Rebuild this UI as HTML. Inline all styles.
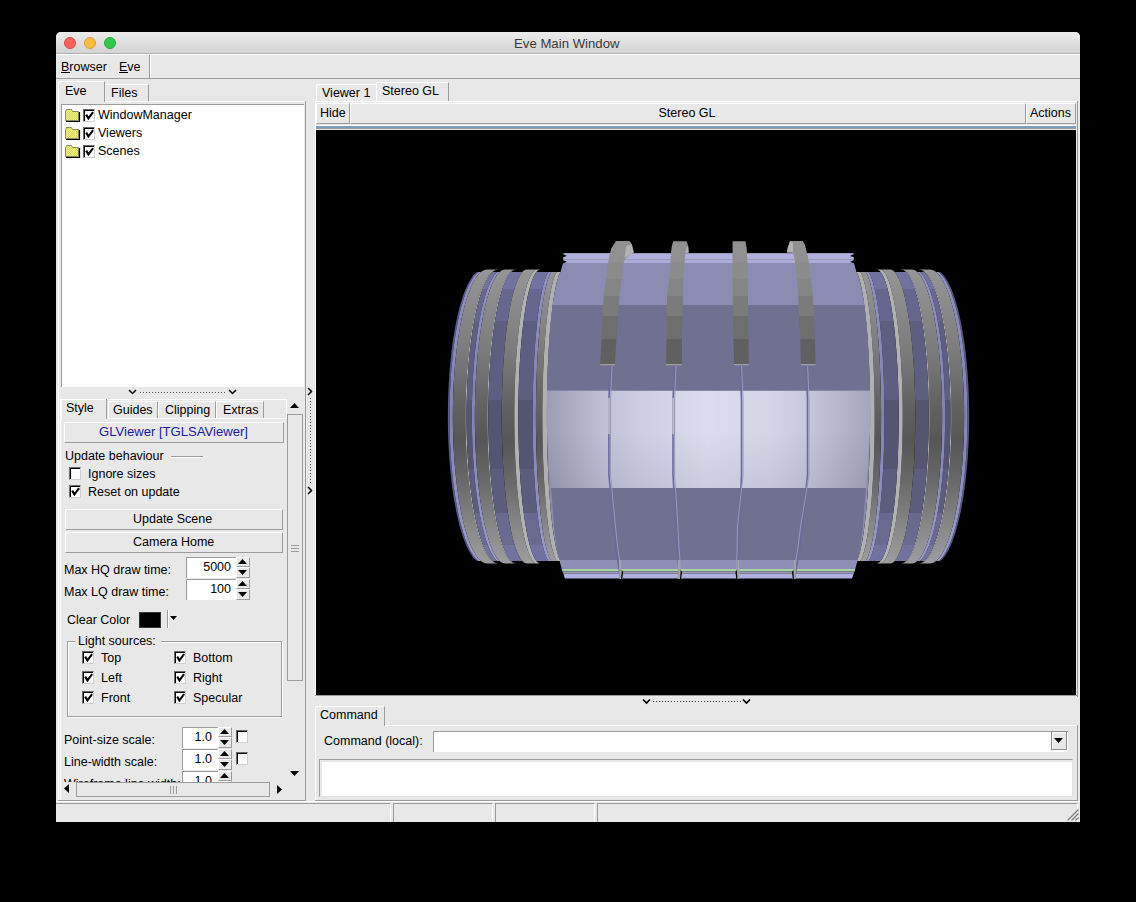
<!DOCTYPE html>
<html><head><meta charset="utf-8">
<style>
html,body{margin:0;padding:0;background:#000;width:1136px;height:902px;overflow:hidden;}
body{position:relative;font-family:"Liberation Sans",sans-serif;color:#000;}
div{position:absolute;box-sizing:border-box;}
.t{white-space:nowrap;line-height:1;font-size:12.5px;}
.cb{width:12px;height:13px;background:#fff;border-top:1px solid #6a6a6a;border-left:1px solid #6a6a6a;border-right:1px solid #d0d0d0;border-bottom:1px solid #d0d0d0;box-shadow:inset 1px 1px 0 #000;}
</style></head><body>

<div style="left:56px;top:32px;width:1024px;height:790px;background:#e8e8e8;border-radius:5px 5px 0 0;overflow:hidden;"></div>
<div style="left:56px;top:32px;width:1024px;height:22px;background:linear-gradient(#ebebeb,#d3d3d3);border-radius:5px 5px 0 0;border-bottom:1px solid #b0b0b0;"></div>
<div style="left:64px;top:37px;width:12px;height:12px;border-radius:50%;background:#fc605c;border:1px solid #df4744;"></div>
<div style="left:84px;top:37px;width:12px;height:12px;border-radius:50%;background:#fdbc40;border:1px solid #de9f34;"></div>
<div style="left:104px;top:37px;width:12px;height:12px;border-radius:50%;background:#34c84a;border:1px solid #27a83a;"></div>
<div class="t" style="left:514px;top:37px;font-size:13.2px;color:#3a3a3a;">Eve Main Window</div>
<div style="left:56px;top:54px;width:1024px;height:1px;background:#fff;"></div>
<div style="left:56px;top:78px;width:1024px;height:1px;background:#9c9c9c;"></div>
<div style="left:149px;top:55px;width:1px;height:23px;background:#9c9c9c;"></div>
<div style="left:150px;top:55px;width:1px;height:23px;background:#fff;"></div>
<div class="t" style="left:61px;top:61px;font-size:12.5px;">Browser</div>
<div style="left:61px;top:72px;width:9px;height:1px;background:#000;"></div>
<div class="t" style="left:119px;top:61px;font-size:12.5px;">Eve</div>
<div style="left:119px;top:72px;width:9px;height:1px;background:#000;"></div>
<div style="left:58px;top:101px;width:1px;height:699px;background:#fff;"></div>
<div style="left:60px;top:399px;width:1px;height:401px;background:#fff;"></div>
<div style="left:305px;top:101px;width:1px;height:700px;background:#9c9c9c;"></div>
<div style="left:58px;top:800px;width:248px;height:1px;background:#9c9c9c;"></div>
<div style="left:58px;top:81px;width:47px;height:21px;border-top:1px solid #fff;border-left:1px solid #fff;border-right:1px solid #9c9c9c;border-top-left-radius:3px;"></div>
<div class="t" style="left:65px;top:85px;font-size:12.5px;">Eve</div>
<div style="left:105px;top:84px;width:44px;height:18px;border-top:1px solid #fff;border-right:1px solid #9c9c9c;"></div>
<div class="t" style="left:111px;top:87px;font-size:12.5px;">Files</div>
<div style="left:105px;top:101px;width:200px;height:1px;background:#fff;"></div>
<div style="left:61px;top:104px;width:243px;height:283px;background:#fff;border-top:1px solid #9c9c9c;border-left:1px solid #9c9c9c;"></div>
<div style="left:65px;top:108px;width:16px;height:14px;"><svg width="16" height="14" style="position:absolute;left:0;top:0"><defs><pattern id="dp" width="2" height="2" patternUnits="userSpaceOnUse"><rect width="2" height="2" fill="#f0f080"/><rect width="1" height="1" fill="#d8d860"/><rect x="1" y="1" width="1" height="1" fill="#d8d860"/></pattern></defs><path d="M0.5 3.5 L1.5 1.5 L6.5 1.5 L7.5 3.5 L13.5 3.5 L13.5 12.5 L0.5 12.5 Z" fill="url(#dp)" stroke="#8a8a5a" stroke-width="1"/><path d="M14.5 4 L14.5 13.5 L1 13.5" stroke="#000" stroke-width="1.2" fill="none"/></svg></div>
<div class="cb" style="left:83px;top:109px;"><svg width="11" height="11" style="position:absolute;left:0;top:0"><path d="M2.2 4.6 L4.4 8.4 L9.1 2.2" stroke="#000" stroke-width="2.1" fill="none"/></svg></div>
<div class="t" style="left:98px;top:109px;font-size:12.5px;">WindowManager</div>
<div style="left:65px;top:126px;width:16px;height:14px;"><svg width="16" height="14" style="position:absolute;left:0;top:0"><defs><pattern id="dp" width="2" height="2" patternUnits="userSpaceOnUse"><rect width="2" height="2" fill="#f0f080"/><rect width="1" height="1" fill="#d8d860"/><rect x="1" y="1" width="1" height="1" fill="#d8d860"/></pattern></defs><path d="M0.5 3.5 L1.5 1.5 L6.5 1.5 L7.5 3.5 L13.5 3.5 L13.5 12.5 L0.5 12.5 Z" fill="url(#dp)" stroke="#8a8a5a" stroke-width="1"/><path d="M14.5 4 L14.5 13.5 L1 13.5" stroke="#000" stroke-width="1.2" fill="none"/></svg></div>
<div class="cb" style="left:83px;top:127px;"><svg width="11" height="11" style="position:absolute;left:0;top:0"><path d="M2.2 4.6 L4.4 8.4 L9.1 2.2" stroke="#000" stroke-width="2.1" fill="none"/></svg></div>
<div class="t" style="left:98px;top:127px;font-size:12.5px;">Viewers</div>
<div style="left:65px;top:144px;width:16px;height:14px;"><svg width="16" height="14" style="position:absolute;left:0;top:0"><defs><pattern id="dp" width="2" height="2" patternUnits="userSpaceOnUse"><rect width="2" height="2" fill="#f0f080"/><rect width="1" height="1" fill="#d8d860"/><rect x="1" y="1" width="1" height="1" fill="#d8d860"/></pattern></defs><path d="M0.5 3.5 L1.5 1.5 L6.5 1.5 L7.5 3.5 L13.5 3.5 L13.5 12.5 L0.5 12.5 Z" fill="url(#dp)" stroke="#8a8a5a" stroke-width="1"/><path d="M14.5 4 L14.5 13.5 L1 13.5" stroke="#000" stroke-width="1.2" fill="none"/></svg></div>
<div class="cb" style="left:83px;top:145px;"><svg width="11" height="11" style="position:absolute;left:0;top:0"><path d="M2.2 4.6 L4.4 8.4 L9.1 2.2" stroke="#000" stroke-width="2.1" fill="none"/></svg></div>
<div class="t" style="left:98px;top:145px;font-size:12.5px;">Scenes</div>
<svg style="position:absolute;left:128px;top:389px" width="110" height="6"><path d="M1 1 L4.5 4.5 L8 1" stroke="#000" stroke-width="1.5" fill="none"/><path d="M101 1 L104.5 4.5 L108 1" stroke="#000" stroke-width="1.5" fill="none"/><line x1="12" y1="3.5" x2="98" y2="3.5" stroke="#555" stroke-width="1" stroke-dasharray="1 2"/></svg>
<div style="left:61px;top:399px;width:226px;height:1px;background:#fff;"></div>
<div style="left:286px;top:399px;width:1px;height:20px;background:#fff;"></div>
<div style="left:61px;top:399px;width:46px;height:20px;border-left:1px solid #fff;border-right:1px solid #9c9c9c;"></div>
<div class="t" style="left:66px;top:402px;font-size:12.5px;">Style</div>
<div style="left:108px;top:401px;width:50px;height:18px;border-top:1px solid #fff;border-left:1px solid #fff;border-right:1px solid #9c9c9c;"></div>
<div class="t" style="left:113px;top:404px;font-size:12.5px;">Guides</div>
<div style="left:158px;top:401px;width:58px;height:18px;border-top:1px solid #fff;border-left:1px solid #fff;border-right:1px solid #9c9c9c;"></div>
<div class="t" style="left:165px;top:404px;font-size:12.5px;">Clipping</div>
<div style="left:216px;top:401px;width:48px;height:18px;border-top:1px solid #fff;border-left:1px solid #fff;border-right:1px solid #9c9c9c;"></div>
<div class="t" style="left:223px;top:404px;font-size:12.5px;">Extras</div>
<div style="left:107px;top:418px;width:180px;height:1px;background:#fff;"></div>
<div style="left:64px;top:422px;width:220px;height:21px;border-top:1px solid #fff;border-left:1px solid #fff;border-right:1px solid #9c9c9c;border-bottom:1px solid #9c9c9c;"></div>
<div class="t" style="left:99px;top:425px;font-size:13.1px;color:#1818a8;">GLViewer [TGLSAViewer]</div>
<div class="t" style="left:65px;top:450px;font-size:12.5px;">Update behaviour</div>
<div style="left:171px;top:456px;width:32px;height:1px;background:#9c9c9c;"></div>
<div style="left:171px;top:457px;width:32px;height:1px;background:#fff;"></div>
<div class="cb" style="left:69px;top:467px;"></div>
<div class="t" style="left:88px;top:468px;font-size:12.5px;">Ignore sizes</div>
<div class="cb" style="left:69px;top:485px;"><svg width="11" height="11" style="position:absolute;left:0;top:0"><path d="M2.2 4.6 L4.4 8.4 L9.1 2.2" stroke="#000" stroke-width="2.1" fill="none"/></svg></div>
<div class="t" style="left:88px;top:486px;font-size:12.5px;">Reset on update</div>
<div style="left:65px;top:509px;width:218px;height:21px;border-top:1px solid #fff;border-left:1px solid #fff;border-right:1px solid #9c9c9c;border-bottom:1px solid #9c9c9c;"></div>
<div class="t" style="left:133px;top:513px;font-size:12.5px;">Update Scene</div>
<div style="left:65px;top:532px;width:218px;height:21px;border-top:1px solid #fff;border-left:1px solid #fff;border-right:1px solid #9c9c9c;border-bottom:1px solid #9c9c9c;"></div>
<div class="t" style="left:133px;top:536px;font-size:12.5px;">Camera Home</div>
<div class="t" style="left:64px;top:564px;font-size:12.5px;">Max HQ draw time:</div>
<div style="left:186px;top:557px;width:50px;height:21px;background:#fff;border-top:1px solid #9c9c9c;border-left:1px solid #9c9c9c;"></div>
<div class="t" style="right:905px;top:561px;font-size:12.5px;">5000</div>
<div style="left:236px;top:557px;width:14px;height:21px;background:#e8e8e8;"></div>
<div style="left:236px;top:557px;width:14px;height:10px;border-top:1px solid #fff;border-left:1px solid #fff;border-right:1px solid #9c9c9c;border-bottom:1px solid #9c9c9c;"></div>
<div style="left:236px;top:567px;width:14px;height:11px;border-top:1px solid #fff;border-left:1px solid #fff;border-right:1px solid #9c9c9c;border-bottom:1px solid #9c9c9c;"></div>
<div style="left:236px;top:557px;width:14px;height:21px;"><svg width="9" height="5" style="position:absolute;left:2px;top:2px"><path d="M0 5 L4.5 0 L9 5Z" fill="#000"/></svg><svg width="9" height="5" style="position:absolute;left:2px;top:13px"><path d="M0 0 L4.5 5 L9 0Z" fill="#000"/></svg></div>
<div class="t" style="left:64px;top:586px;font-size:12.5px;">Max LQ draw time:</div>
<div style="left:186px;top:579px;width:50px;height:21px;background:#fff;border-top:1px solid #9c9c9c;border-left:1px solid #9c9c9c;"></div>
<div class="t" style="right:905px;top:583px;font-size:12.5px;">100</div>
<div style="left:236px;top:579px;width:14px;height:21px;background:#e8e8e8;"></div>
<div style="left:236px;top:579px;width:14px;height:10px;border-top:1px solid #fff;border-left:1px solid #fff;border-right:1px solid #9c9c9c;border-bottom:1px solid #9c9c9c;"></div>
<div style="left:236px;top:589px;width:14px;height:11px;border-top:1px solid #fff;border-left:1px solid #fff;border-right:1px solid #9c9c9c;border-bottom:1px solid #9c9c9c;"></div>
<div style="left:236px;top:579px;width:14px;height:21px;"><svg width="9" height="5" style="position:absolute;left:2px;top:2px"><path d="M0 5 L4.5 0 L9 5Z" fill="#000"/></svg><svg width="9" height="5" style="position:absolute;left:2px;top:13px"><path d="M0 0 L4.5 5 L9 0Z" fill="#000"/></svg></div>
<div class="t" style="left:67px;top:614px;font-size:12.5px;">Clear Color</div>
<div style="left:139px;top:612px;width:22px;height:16px;background:#000;border:1px solid #333;"></div>
<div style="left:167px;top:610px;width:1px;height:18px;background:#9c9c9c;"></div>
<div style="left:168px;top:610px;width:1px;height:18px;background:#fff;"></div>
<svg style="position:absolute;left:170px;top:616px" width="8" height="5"><path d="M0 0 L7 0 L3.5 4Z" fill="#000"/></svg>
<div style="left:67px;top:641px;width:215px;height:76px;border-top:1px solid #9c9c9c;border-left:1px solid #9c9c9c;border-right:1px solid #9c9c9c;border-bottom:1px solid #9c9c9c;box-shadow:1px 1px 0 #fff inset, 1px 1px 0 #fff;"></div>
<div style="left:75px;top:634px;width:86px;height:14px;background:#e8e8e8;"></div>
<div class="t" style="left:78px;top:635px;font-size:12.5px;">Light sources:</div>
<div class="cb" style="left:82px;top:651px;"><svg width="11" height="11" style="position:absolute;left:0;top:0"><path d="M2.2 4.6 L4.4 8.4 L9.1 2.2" stroke="#000" stroke-width="2.1" fill="none"/></svg></div>
<div class="t" style="left:101px;top:652px;font-size:12.5px;">Top</div>
<div class="cb" style="left:174px;top:651px;"><svg width="11" height="11" style="position:absolute;left:0;top:0"><path d="M2.2 4.6 L4.4 8.4 L9.1 2.2" stroke="#000" stroke-width="2.1" fill="none"/></svg></div>
<div class="t" style="left:193px;top:652px;font-size:12.5px;">Bottom</div>
<div class="cb" style="left:82px;top:671px;"><svg width="11" height="11" style="position:absolute;left:0;top:0"><path d="M2.2 4.6 L4.4 8.4 L9.1 2.2" stroke="#000" stroke-width="2.1" fill="none"/></svg></div>
<div class="t" style="left:101px;top:672px;font-size:12.5px;">Left</div>
<div class="cb" style="left:174px;top:671px;"><svg width="11" height="11" style="position:absolute;left:0;top:0"><path d="M2.2 4.6 L4.4 8.4 L9.1 2.2" stroke="#000" stroke-width="2.1" fill="none"/></svg></div>
<div class="t" style="left:193px;top:672px;font-size:12.5px;">Right</div>
<div class="cb" style="left:82px;top:691px;"><svg width="11" height="11" style="position:absolute;left:0;top:0"><path d="M2.2 4.6 L4.4 8.4 L9.1 2.2" stroke="#000" stroke-width="2.1" fill="none"/></svg></div>
<div class="t" style="left:101px;top:692px;font-size:12.5px;">Front</div>
<div class="cb" style="left:174px;top:691px;"><svg width="11" height="11" style="position:absolute;left:0;top:0"><path d="M2.2 4.6 L4.4 8.4 L9.1 2.2" stroke="#000" stroke-width="2.1" fill="none"/></svg></div>
<div class="t" style="left:193px;top:692px;font-size:12.5px;">Specular</div>
<div style="left:61px;top:720px;width:226px;height:62px;overflow:hidden;">
<div class="t" style="left:3px;top:14px;font-size:12.5px;">Point-size scale:</div>
<div style="left:121px;top:7px;width:36px;height:21px;background:#fff;border-top:1px solid #9c9c9c;border-left:1px solid #9c9c9c;"></div>
<div class="t" style="left:121px;width:30px;text-align:right;top:11px;">1.0</div>
<div style="left:157px;top:7px;width:14px;height:21px;background:#e8e8e8;"></div>
<div style="left:157px;top:7px;width:14px;height:10px;border-top:1px solid #fff;border-left:1px solid #fff;border-right:1px solid #9c9c9c;border-bottom:1px solid #9c9c9c;"></div>
<div style="left:157px;top:17px;width:14px;height:11px;border-top:1px solid #fff;border-left:1px solid #fff;border-right:1px solid #9c9c9c;border-bottom:1px solid #9c9c9c;"></div>
<div style="left:157px;top:7px;width:14px;height:21px;"><svg width="9" height="5" style="position:absolute;left:2px;top:2px"><path d="M0 5 L4.5 0 L9 5Z" fill="#000"/></svg><svg width="9" height="5" style="position:absolute;left:2px;top:13px"><path d="M0 0 L4.5 5 L9 0Z" fill="#000"/></svg></div>
<div class="cb" style="left:175px;top:10px;"></div>
<div class="t" style="left:3px;top:36px;font-size:12.5px;">Line-width scale:</div>
<div style="left:121px;top:29px;width:36px;height:21px;background:#fff;border-top:1px solid #9c9c9c;border-left:1px solid #9c9c9c;"></div>
<div class="t" style="left:121px;width:30px;text-align:right;top:33px;">1.0</div>
<div style="left:157px;top:29px;width:14px;height:21px;background:#e8e8e8;"></div>
<div style="left:157px;top:29px;width:14px;height:10px;border-top:1px solid #fff;border-left:1px solid #fff;border-right:1px solid #9c9c9c;border-bottom:1px solid #9c9c9c;"></div>
<div style="left:157px;top:39px;width:14px;height:11px;border-top:1px solid #fff;border-left:1px solid #fff;border-right:1px solid #9c9c9c;border-bottom:1px solid #9c9c9c;"></div>
<div style="left:157px;top:29px;width:14px;height:21px;"><svg width="9" height="5" style="position:absolute;left:2px;top:2px"><path d="M0 5 L4.5 0 L9 5Z" fill="#000"/></svg><svg width="9" height="5" style="position:absolute;left:2px;top:13px"><path d="M0 0 L4.5 5 L9 0Z" fill="#000"/></svg></div>
<div class="cb" style="left:175px;top:32px;"></div>
<div class="t" style="left:3px;top:58px;font-size:12.5px;">Wireframe line width:</div>
<div style="left:121px;top:51px;width:36px;height:21px;background:#fff;border-top:1px solid #9c9c9c;border-left:1px solid #9c9c9c;"></div>
<div class="t" style="left:121px;width:30px;text-align:right;top:55px;">1.0</div>
<div style="left:157px;top:51px;width:14px;height:21px;background:#e8e8e8;"></div>
<div style="left:157px;top:51px;width:14px;height:10px;border-top:1px solid #fff;border-left:1px solid #fff;border-right:1px solid #9c9c9c;border-bottom:1px solid #9c9c9c;"></div>
<div style="left:157px;top:61px;width:14px;height:11px;border-top:1px solid #fff;border-left:1px solid #fff;border-right:1px solid #9c9c9c;border-bottom:1px solid #9c9c9c;"></div>
<div style="left:157px;top:51px;width:14px;height:21px;"><svg width="9" height="5" style="position:absolute;left:2px;top:2px"><path d="M0 5 L4.5 0 L9 5Z" fill="#000"/></svg><svg width="9" height="5" style="position:absolute;left:2px;top:13px"><path d="M0 0 L4.5 5 L9 0Z" fill="#000"/></svg></div>
</div>
<svg style="position:absolute;left:290px;top:403px" width="9" height="6"><path d="M0 5 L4.5 0 L9 5Z" fill="#000"/></svg>
<div style="left:287px;top:414px;width:16px;height:267px;border-top:1px solid #9c9c9c;border-left:1px solid #9c9c9c;border-right:1px solid #9c9c9c;border-bottom:1px solid #9c9c9c;"></div>
<div style="left:291px;top:545px;width:8px;height:1px;background:#9c9c9c;"></div>
<div style="left:291px;top:548px;width:8px;height:1px;background:#9c9c9c;"></div>
<div style="left:291px;top:551px;width:8px;height:1px;background:#9c9c9c;"></div>
<svg style="position:absolute;left:290px;top:771px" width="9" height="6"><path d="M0 0 L4.5 5 L9 0Z" fill="#000"/></svg>
<svg style="position:absolute;left:64px;top:784px" width="6" height="9"><path d="M5 0 L0 4.5 L5 9Z" fill="#000"/></svg>
<div style="left:76px;top:782px;width:194px;height:15px;border-top:1px solid #9c9c9c;border-left:1px solid #9c9c9c;border-right:1px solid #9c9c9c;border-bottom:1px solid #9c9c9c;"></div>
<div style="left:170px;top:786px;width:1px;height:8px;background:#9c9c9c;"></div>
<div style="left:173px;top:786px;width:1px;height:8px;background:#9c9c9c;"></div>
<div style="left:176px;top:786px;width:1px;height:8px;background:#9c9c9c;"></div>
<svg style="position:absolute;left:277px;top:785px" width="6" height="9"><path d="M0 0 L5 4.5 L0 9Z" fill="#000"/></svg>
<svg style="position:absolute;left:306px;top:386px" width="8" height="110"><path d="M2 2 L5.5 5.5 L2 9" stroke="#000" stroke-width="1.5" fill="none"/><path d="M2 101 L5.5 104.5 L2 108" stroke="#000" stroke-width="1.5" fill="none"/><line x1="4.5" y1="12" x2="4.5" y2="98" stroke="#555" stroke-width="1" stroke-dasharray="1 2"/></svg>
<div style="left:316px;top:84px;width:61px;height:18px;border-top:1px solid #fff;border-left:1px solid #fff;border-top-left-radius:3px;"></div>
<div class="t" style="left:322px;top:87px;font-size:12.5px;">Viewer 1</div>
<div style="left:376px;top:82px;width:73px;height:20px;border-top:1px solid #fff;border-left:1px solid #fff;border-right:1px solid #9c9c9c;"></div>
<div class="t" style="left:382px;top:85px;font-size:12.5px;">Stereo GL</div>
<div style="left:315px;top:101px;width:763px;height:1px;background:#fff;"></div>
<div style="left:315px;top:101px;width:1px;height:596px;background:#fff;"></div>
<div style="left:1077px;top:101px;width:1px;height:596px;background:#9c9c9c;"></div>
<div style="left:316px;top:103px;width:34px;height:21px;border-top:1px solid #fff;border-left:1px solid #fff;border-right:1px solid #9c9c9c;border-bottom:1px solid #9c9c9c;"></div>
<div class="t" style="left:320px;top:107px;font-size:12.5px;">Hide</div>
<div style="left:350px;top:103px;width:676px;height:21px;border-top:1px solid #fff;border-left:1px solid #fff;border-right:1px solid #9c9c9c;border-bottom:1px solid #9c9c9c;"></div>
<div class="t" style="left:487px;width:400px;text-align:center;top:107px;font-size:12.5px;">Stereo GL</div>
<div style="left:1026px;top:103px;width:50px;height:21px;border-top:1px solid #fff;border-left:1px solid #fff;border-right:1px solid #9c9c9c;border-bottom:1px solid #9c9c9c;"></div>
<div class="t" style="left:1030px;top:107px;font-size:12.5px;">Actions</div>
<div style="left:316px;top:125px;width:760px;height:1px;background:#fff;"></div>
<div style="left:316px;top:126px;width:760px;height:2px;background:#7e9cbd;"></div>
<div style="left:316px;top:128px;width:760px;height:1px;background:#9c9c9c;"></div>
<div style="left:316px;top:130px;width:760px;height:565px;background:#000;overflow:hidden;"></div>
<div style="left:316px;top:130px;width:760px;height:565px;overflow:hidden;"><svg width="760" height="565" viewBox="316 130 760 565" style="position:absolute;left:0;top:0">
<defs>
<linearGradient id="gr" x1="0" y1="268" x2="0" y2="565" gradientUnits="userSpaceOnUse"><stop offset="0.0000" stop-color="#969696"/><stop offset="0.1077" stop-color="#8c8c8c"/><stop offset="0.2761" stop-color="#7c7c7c"/><stop offset="0.4444" stop-color="#646464"/><stop offset="0.5791" stop-color="#565656"/><stop offset="0.7138" stop-color="#686868"/><stop offset="0.8822" stop-color="#8a8a8a"/><stop offset="1.0000" stop-color="#9e9e9e"/></linearGradient>
<linearGradient id="gp" x1="0" y1="268" x2="0" y2="565" gradientUnits="userSpaceOnUse"><stop offset="0.0000" stop-color="#7272a0"/><stop offset="0.0707" stop-color="#7272a0"/><stop offset="0.0707" stop-color="#66668e"/><stop offset="0.1785" stop-color="#66668e"/><stop offset="0.1785" stop-color="#5e5e80"/><stop offset="0.4444" stop-color="#5e5e80"/><stop offset="0.4444" stop-color="#555572"/><stop offset="0.6768" stop-color="#555572"/><stop offset="0.6768" stop-color="#5c5c7c"/><stop offset="0.8249" stop-color="#5c5c7c"/><stop offset="0.8249" stop-color="#6a6a90"/><stop offset="0.9327" stop-color="#6a6a90"/><stop offset="0.9327" stop-color="#7272a0"/><stop offset="1.0000" stop-color="#7272a0"/></linearGradient>
<linearGradient id="lt" x1="0" y1="268" x2="0" y2="565" gradientUnits="userSpaceOnUse"><stop offset="0.0000" stop-color="#9090c4"/><stop offset="0.4983" stop-color="#8282b8"/><stop offset="1.0000" stop-color="#9a9acc"/></linearGradient>
<linearGradient id="mid" x1="546" y1="0" x2="871" y2="0" gradientUnits="userSpaceOnUse"><stop offset="0" stop-color="#9c9cb4"/><stop offset="0.19" stop-color="#c2c2d8"/><stop offset="0.3" stop-color="#cfcfe3"/><stop offset="0.5" stop-color="#dcdcee"/><stop offset="0.7" stop-color="#d4d4e7"/><stop offset="0.8" stop-color="#c8c8dc"/><stop offset="1" stop-color="#a4a4bc"/></linearGradient>
<linearGradient id="midv" x1="0" y1="391" x2="0" y2="488" gradientUnits="userSpaceOnUse"><stop offset="0" stop-color="#000020" stop-opacity="0"/><stop offset="0.4" stop-color="#000020" stop-opacity="0"/><stop offset="1" stop-color="#000020" stop-opacity="0.07"/></linearGradient>
</defs>
<g>
<polygon points="476.83,272.00 475.23,273.40 473.64,275.11 472.07,277.12 470.53,279.42 469.01,282.02 467.53,284.91 466.08,288.07 464.66,291.51 463.29,295.22 461.96,299.19 460.67,303.40 459.44,307.86 458.25,312.55 457.12,317.46 456.04,322.58 455.02,327.91 454.06,333.42 453.17,339.11 452.34,344.96 451.57,350.97 450.88,357.12 450.25,363.39 449.69,369.78 449.21,376.27 448.79,382.84 448.45,389.49 448.19,396.19 448.00,402.94 447.89,409.71 447.85,416.50 447.89,423.29 448.00,430.06 448.19,436.81 448.45,443.51 448.79,450.16 449.21,456.73 449.69,463.22 450.25,469.61 450.88,475.88 451.57,482.03 452.34,488.04 453.17,493.89 454.06,499.58 455.02,505.09 456.04,510.42 457.12,515.54 458.25,520.45 459.44,525.14 460.67,529.60 461.96,533.81 463.29,537.78 464.66,541.49 466.08,544.93 467.53,548.09 469.01,550.98 470.53,553.58 472.07,555.88 473.64,557.89 475.23,559.60 476.83,561.00 478.27,561.00 476.68,559.60 475.11,557.89 473.55,555.88 472.02,553.58 470.52,550.98 469.05,548.09 467.61,544.93 466.21,541.49 464.85,537.78 463.53,533.81 462.26,529.60 461.03,525.14 459.86,520.45 458.73,515.54 457.67,510.42 456.66,505.09 455.71,499.58 454.82,493.89 454.00,488.04 453.24,482.03 452.55,475.88 451.93,469.61 451.38,463.22 450.89,456.73 450.49,450.16 450.15,443.51 449.89,436.81 449.70,430.06 449.59,423.29 449.55,416.50 449.59,409.71 449.70,402.94 449.89,396.19 450.15,389.49 450.49,382.84 450.89,376.27 451.38,369.78 451.93,363.39 452.55,357.12 453.24,350.97 454.00,344.96 454.82,339.11 455.71,333.42 456.66,327.91 457.67,322.58 458.73,317.46 459.86,312.55 461.03,307.86 462.26,303.40 463.53,299.19 464.85,295.22 466.21,291.51 467.61,288.07 469.05,284.91 470.52,282.02 472.02,279.42 473.55,277.12 475.11,275.11 476.68,273.40 478.27,272.00" fill="#5a5a88"/>
<polygon points="478.27,272.00 476.68,273.40 475.11,275.11 473.55,277.12 472.02,279.42 470.52,282.02 469.05,284.91 467.61,288.07 466.21,291.51 464.85,295.22 463.53,299.19 462.26,303.40 461.03,307.86 459.86,312.55 458.73,317.46 457.67,322.58 456.66,327.91 455.71,333.42 454.82,339.11 454.00,344.96 453.24,350.97 452.55,357.12 451.93,363.39 451.38,369.78 450.89,376.27 450.49,382.84 450.15,389.49 449.89,396.19 449.70,402.94 449.59,409.71 449.55,416.50 449.59,423.29 449.70,430.06 449.89,436.81 450.15,443.51 450.49,450.16 450.89,456.73 451.38,463.22 451.93,469.61 452.55,475.88 453.24,482.03 454.00,488.04 454.82,493.89 455.71,499.58 456.66,505.09 457.67,510.42 458.73,515.54 459.86,520.45 461.03,525.14 462.26,529.60 463.53,533.81 464.85,537.78 466.21,541.49 467.61,544.93 469.05,548.09 470.52,550.98 472.02,553.58 473.55,555.88 475.11,557.89 476.68,559.60 478.27,561.00 481.06,561.00 479.50,559.60 477.95,557.89 476.43,555.88 474.93,553.58 473.45,550.98 472.01,548.09 470.59,544.93 469.22,541.49 467.88,537.78 466.58,533.81 465.33,529.60 464.13,525.14 462.97,520.45 461.87,515.54 460.82,510.42 459.83,505.09 458.90,499.58 458.03,493.89 457.22,488.04 456.48,482.03 455.80,475.88 455.19,469.61 454.65,463.22 454.17,456.73 453.77,450.16 453.44,443.51 453.19,436.81 453.00,430.06 452.89,423.29 452.85,416.50 452.89,409.71 453.00,402.94 453.19,396.19 453.44,389.49 453.77,382.84 454.17,376.27 454.65,369.78 455.19,363.39 455.80,357.12 456.48,350.97 457.22,344.96 458.03,339.11 458.90,333.42 459.83,327.91 460.82,322.58 461.87,317.46 462.97,312.55 464.13,307.86 465.33,303.40 466.58,299.19 467.88,295.22 469.22,291.51 470.59,288.07 472.01,284.91 473.45,282.02 474.93,279.42 476.43,277.12 477.95,275.11 479.50,273.40 481.06,272.00" fill="url(#lt)"/>
<polygon points="487.40,269.50 485.60,269.70 483.79,270.31 482.00,271.31 480.22,272.71 478.46,274.51 476.73,276.69 475.02,279.26 473.35,282.21 471.72,285.52 470.13,289.19 468.59,293.22 467.10,297.57 465.66,302.26 464.29,307.26 462.97,312.56 461.73,318.14 460.55,323.99 459.45,330.10 458.43,336.44 457.48,343.00 456.62,349.76 455.84,356.71 455.15,363.82 454.54,371.07 454.03,378.45 453.61,385.94 453.28,393.50 453.04,401.13 452.90,408.81 452.85,416.50 452.90,424.19 453.04,431.87 453.28,439.50 453.61,447.06 454.03,454.55 454.54,461.93 455.15,469.18 455.84,476.29 456.62,483.24 457.48,490.00 458.43,496.56 459.45,502.90 460.55,509.01 461.73,514.86 462.97,520.44 464.29,525.74 465.66,530.74 467.10,535.43 468.59,539.78 470.13,543.81 471.72,547.48 473.35,550.79 475.02,553.74 476.73,556.31 478.46,558.49 480.22,560.29 482.00,561.69 483.79,562.69 485.60,563.30 487.40,563.50 497.70,563.50 496.02,563.30 494.34,562.69 492.67,561.69 491.02,560.29 489.38,558.49 487.77,556.31 486.18,553.74 484.63,550.79 483.11,547.48 481.63,543.81 480.20,539.78 478.81,535.43 477.48,530.74 476.20,525.74 474.98,520.44 473.82,514.86 472.73,509.01 471.70,502.90 470.75,496.56 469.87,490.00 469.07,483.24 468.34,476.29 467.70,469.18 467.14,461.93 466.66,454.55 466.27,447.06 465.96,439.50 465.74,431.87 465.61,424.19 465.56,416.50 465.61,408.81 465.74,401.13 465.96,393.50 466.27,385.94 466.66,378.45 467.14,371.07 467.70,363.82 468.34,356.71 469.07,349.76 469.87,343.00 470.75,336.44 471.70,330.10 472.73,323.99 473.82,318.14 474.98,312.56 476.20,307.26 477.48,302.26 478.81,297.57 480.20,293.22 481.63,289.19 483.11,285.52 484.63,282.21 486.18,279.26 487.77,276.69 489.38,274.51 491.02,272.71 492.67,271.31 494.34,270.31 496.02,269.70 497.70,269.50" fill="url(#gr)"/>
<polygon points="497.70,269.50 496.02,269.70 494.34,270.31 492.67,271.31 491.02,272.71 489.38,274.51 487.77,276.69 486.18,279.26 484.63,282.21 483.11,285.52 481.63,289.19 480.20,293.22 478.81,297.57 477.48,302.26 476.20,307.26 474.98,312.56 473.82,318.14 472.73,323.99 471.70,330.10 470.75,336.44 469.87,343.00 469.07,349.76 468.34,356.71 467.70,363.82 467.14,371.07 466.66,378.45 466.27,385.94 465.96,393.50 465.74,401.13 465.61,408.81 465.56,416.50 465.61,424.19 465.74,431.87 465.96,439.50 466.27,447.06 466.66,454.55 467.14,461.93 467.70,469.18 468.34,476.29 469.07,483.24 469.87,490.00 470.75,496.56 471.70,502.90 472.73,509.01 473.82,514.86 474.98,520.44 476.20,525.74 477.48,530.74 478.81,535.43 480.20,539.78 481.63,543.81 483.11,547.48 484.63,550.79 486.18,553.74 487.77,556.31 489.38,558.49 491.02,560.29 492.67,561.69 494.34,562.69 496.02,563.30 497.70,563.50 498.43,563.50 496.76,563.30 495.09,562.69 493.43,561.69 491.78,560.29 490.16,558.49 488.55,556.31 486.98,553.74 485.43,550.79 483.92,547.48 482.45,543.81 481.02,539.78 479.64,535.43 478.31,530.74 477.04,525.74 475.83,520.44 474.68,514.86 473.59,509.01 472.57,502.90 471.62,496.56 470.75,490.00 469.95,483.24 469.23,476.29 468.59,469.18 468.03,461.93 467.55,454.55 467.16,447.06 466.86,439.50 466.64,431.87 466.51,424.19 466.46,416.50 466.51,408.81 466.64,401.13 466.86,393.50 467.16,385.94 467.55,378.45 468.03,371.07 468.59,363.82 469.23,356.71 469.95,349.76 470.75,343.00 471.62,336.44 472.57,330.10 473.59,323.99 474.68,318.14 475.83,312.56 477.04,307.26 478.31,302.26 479.64,297.57 481.02,293.22 482.45,289.19 483.92,285.52 485.43,282.21 486.98,279.26 488.55,276.69 490.16,274.51 491.78,272.71 493.43,271.31 495.09,270.31 496.76,269.70 498.43,269.50" fill="#c4c4c4"/>
<polygon points="492.56,272.00 491.12,273.40 489.69,275.11 488.28,277.12 486.89,279.42 485.52,282.02 484.18,284.91 482.88,288.07 481.61,291.51 480.37,295.22 479.17,299.19 478.01,303.40 476.90,307.86 475.83,312.55 474.81,317.46 473.84,322.58 472.92,327.91 472.06,333.42 471.25,339.11 470.51,344.96 469.82,350.97 469.19,357.12 468.62,363.39 468.12,369.78 467.69,376.27 467.31,382.84 467.01,389.49 466.77,396.19 466.60,402.94 466.50,409.71 466.46,416.50 466.50,423.29 466.60,430.06 466.77,436.81 467.01,443.51 467.31,450.16 467.69,456.73 468.12,463.22 468.62,469.61 469.19,475.88 469.82,482.03 470.51,488.04 471.25,493.89 472.06,499.58 472.92,505.09 473.84,510.42 474.81,515.54 475.83,520.45 476.90,525.14 478.01,529.60 479.17,533.81 480.37,537.78 481.61,541.49 482.88,544.93 484.18,548.09 485.52,550.98 486.89,553.58 488.28,555.88 489.69,557.89 491.12,559.60 492.56,561.00 497.13,561.00 495.73,559.60 494.35,557.89 492.98,555.88 491.64,553.58 490.31,550.98 489.02,548.09 487.76,544.93 486.52,541.49 485.33,537.78 484.17,533.81 483.04,529.60 481.97,525.14 480.93,520.45 479.95,515.54 479.01,510.42 478.12,505.09 477.28,499.58 476.50,493.89 475.78,488.04 475.11,482.03 474.51,475.88 473.96,469.61 473.47,463.22 473.05,456.73 472.69,450.16 472.40,443.51 472.17,436.81 472.00,430.06 471.90,423.29 471.87,416.50 471.90,409.71 472.00,402.94 472.17,396.19 472.40,389.49 472.69,382.84 473.05,376.27 473.47,369.78 473.96,363.39 474.51,357.12 475.11,350.97 475.78,344.96 476.50,339.11 477.28,333.42 478.12,327.91 479.01,322.58 479.95,317.46 480.93,312.55 481.97,307.86 483.04,303.40 484.17,299.19 485.33,295.22 486.52,291.51 487.76,288.07 489.02,284.91 490.31,282.02 491.64,279.42 492.98,277.12 494.35,275.11 495.73,273.40 497.13,272.00" fill="url(#gp)"/>
<polygon points="497.13,272.00 495.73,273.40 494.35,275.11 492.98,277.12 491.64,279.42 490.31,282.02 489.02,284.91 487.76,288.07 486.52,291.51 485.33,295.22 484.17,299.19 483.04,303.40 481.97,307.86 480.93,312.55 479.95,317.46 479.01,322.58 478.12,327.91 477.28,333.42 476.50,339.11 475.78,344.96 475.11,350.97 474.51,357.12 473.96,363.39 473.47,369.78 473.05,376.27 472.69,382.84 472.40,389.49 472.17,396.19 472.00,402.94 471.90,409.71 471.87,416.50 471.90,423.29 472.00,430.06 472.17,436.81 472.40,443.51 472.69,450.16 473.05,456.73 473.47,463.22 473.96,469.61 474.51,475.88 475.11,482.03 475.78,488.04 476.50,493.89 477.28,499.58 478.12,505.09 479.01,510.42 479.95,515.54 480.93,520.45 481.97,525.14 483.04,529.60 484.17,533.81 485.33,537.78 486.52,541.49 487.76,544.93 489.02,548.09 490.31,550.98 491.64,553.58 492.98,555.88 494.35,557.89 495.73,559.60 497.13,561.00 499.66,561.00 498.29,559.60 496.93,557.89 495.59,555.88 494.27,553.58 492.98,550.98 491.71,548.09 490.47,544.93 489.26,541.49 488.08,537.78 486.94,533.81 485.84,529.60 484.78,525.14 483.77,520.45 482.80,515.54 481.88,510.42 481.01,505.09 480.19,499.58 479.42,493.89 478.71,488.04 478.06,482.03 477.46,475.88 476.92,469.61 476.45,463.22 476.03,456.73 475.68,450.16 475.39,443.51 475.16,436.81 475.00,430.06 474.90,423.29 474.87,416.50 474.90,409.71 475.00,402.94 475.16,396.19 475.39,389.49 475.68,382.84 476.03,376.27 476.45,369.78 476.92,363.39 477.46,357.12 478.06,350.97 478.71,344.96 479.42,339.11 480.19,333.42 481.01,327.91 481.88,322.58 482.80,317.46 483.77,312.55 484.78,307.86 485.84,303.40 486.94,299.19 488.08,295.22 489.26,291.51 490.47,288.07 491.71,284.91 492.98,282.02 494.27,279.42 495.59,277.12 496.93,275.11 498.29,273.40 499.66,272.00" fill="url(#lt)"/>
<polygon points="505.24,269.50 503.65,269.70 502.07,270.31 500.49,271.31 498.93,272.71 497.38,274.51 495.86,276.69 494.36,279.26 492.89,282.21 491.45,285.52 490.06,289.19 488.70,293.22 487.39,297.57 486.13,302.26 484.92,307.26 483.77,312.56 482.67,318.14 481.64,323.99 480.67,330.10 479.77,336.44 478.94,343.00 478.18,349.76 477.50,356.71 476.89,363.82 476.36,371.07 475.91,378.45 475.54,385.94 475.25,393.50 475.04,401.13 474.91,408.81 474.87,416.50 474.91,424.19 475.04,431.87 475.25,439.50 475.54,447.06 475.91,454.55 476.36,461.93 476.89,469.18 477.50,476.29 478.18,483.24 478.94,490.00 479.77,496.56 480.67,502.90 481.64,509.01 482.67,514.86 483.77,520.44 484.92,525.74 486.13,530.74 487.39,535.43 488.70,539.78 490.06,543.81 491.45,547.48 492.89,550.79 494.36,553.74 495.86,556.31 497.38,558.49 498.93,560.29 500.49,561.69 502.07,562.69 503.65,563.30 505.24,563.50 515.38,563.50 513.91,563.30 512.45,562.69 511.00,561.69 509.56,560.29 508.13,558.49 506.73,556.31 505.34,553.74 503.99,550.79 502.67,547.48 501.38,543.81 500.13,539.78 498.92,535.43 497.76,530.74 496.64,525.74 495.58,520.44 494.57,514.86 493.62,509.01 492.73,502.90 491.90,496.56 491.13,490.00 490.43,483.24 489.80,476.29 489.24,469.18 488.75,461.93 488.34,454.55 487.99,447.06 487.73,439.50 487.54,431.87 487.42,424.19 487.38,416.50 487.42,408.81 487.54,401.13 487.73,393.50 487.99,385.94 488.34,378.45 488.75,371.07 489.24,363.82 489.80,356.71 490.43,349.76 491.13,343.00 491.90,336.44 492.73,330.10 493.62,323.99 494.57,318.14 495.58,312.56 496.64,307.26 497.76,302.26 498.92,297.57 500.13,293.22 501.38,289.19 502.67,285.52 503.99,282.21 505.34,279.26 506.73,276.69 508.13,274.51 509.56,272.71 511.00,271.31 512.45,270.31 513.91,269.70 515.38,269.50" fill="url(#gr)"/>
<polygon points="515.38,269.50 513.91,269.70 512.45,270.31 511.00,271.31 509.56,272.71 508.13,274.51 506.73,276.69 505.34,279.26 503.99,282.21 502.67,285.52 501.38,289.19 500.13,293.22 498.92,297.57 497.76,302.26 496.64,307.26 495.58,312.56 494.57,318.14 493.62,323.99 492.73,330.10 491.90,336.44 491.13,343.00 490.43,349.76 489.80,356.71 489.24,363.82 488.75,371.07 488.34,378.45 487.99,385.94 487.73,393.50 487.54,401.13 487.42,408.81 487.38,416.50 487.42,424.19 487.54,431.87 487.73,439.50 487.99,447.06 488.34,454.55 488.75,461.93 489.24,469.18 489.80,476.29 490.43,483.24 491.13,490.00 491.90,496.56 492.73,502.90 493.62,509.01 494.57,514.86 495.58,520.44 496.64,525.74 497.76,530.74 498.92,535.43 500.13,539.78 501.38,543.81 502.67,547.48 503.99,550.79 505.34,553.74 506.73,556.31 508.13,558.49 509.56,560.29 511.00,561.69 512.45,562.69 513.91,563.30 515.38,563.50 516.11,563.50 514.65,563.30 513.20,562.69 511.75,561.69 510.32,560.29 508.91,558.49 507.51,556.31 506.14,553.74 504.79,550.79 503.47,547.48 502.19,543.81 500.95,539.78 499.75,535.43 498.60,530.74 497.49,525.74 496.43,520.44 495.43,514.86 494.48,509.01 493.60,502.90 492.77,496.56 492.01,490.00 491.32,483.24 490.69,476.29 490.13,469.18 489.64,461.93 489.23,454.55 488.89,447.06 488.62,439.50 488.43,431.87 488.32,424.19 488.28,416.50 488.32,408.81 488.43,401.13 488.62,393.50 488.89,385.94 489.23,378.45 489.64,371.07 490.13,363.82 490.69,356.71 491.32,349.76 492.01,343.00 492.77,336.44 493.60,330.10 494.48,323.99 495.43,318.14 496.43,312.56 497.49,307.26 498.60,302.26 499.75,297.57 500.95,293.22 502.19,289.19 503.47,285.52 504.79,282.21 506.14,279.26 507.51,276.69 508.91,274.51 510.32,272.71 511.75,271.31 513.20,270.31 514.65,269.70 516.11,269.50" fill="#c4c4c4"/>
<polygon points="511.00,272.00 509.74,273.40 508.49,275.11 507.27,277.12 506.06,279.42 504.87,282.02 503.71,284.91 502.57,288.07 501.46,291.51 500.38,295.22 499.34,299.19 498.33,303.40 497.36,307.86 496.43,312.55 495.55,317.46 494.70,322.58 493.90,327.91 493.15,333.42 492.45,339.11 491.80,344.96 491.20,350.97 490.65,357.12 490.16,363.39 489.73,369.78 489.34,376.27 489.02,382.84 488.76,389.49 488.55,396.19 488.40,402.94 488.31,409.71 488.28,416.50 488.31,423.29 488.40,430.06 488.55,436.81 488.76,443.51 489.02,450.16 489.34,456.73 489.73,463.22 490.16,469.61 490.65,475.88 491.20,482.03 491.80,488.04 492.45,493.89 493.15,499.58 493.90,505.09 494.70,510.42 495.55,515.54 496.43,520.45 497.36,525.14 498.33,529.60 499.34,533.81 500.38,537.78 501.46,541.49 502.57,544.93 503.71,548.09 504.87,550.98 506.06,553.58 507.27,555.88 508.49,557.89 509.74,559.60 511.00,561.00 522.33,561.00 521.19,559.60 520.06,557.89 518.94,555.88 517.84,553.58 516.76,550.98 515.71,548.09 514.67,544.93 513.67,541.49 512.69,537.78 511.74,533.81 510.82,529.60 509.94,525.14 509.10,520.45 508.29,515.54 507.52,510.42 506.80,505.09 506.12,499.58 505.48,493.89 504.89,488.04 504.34,482.03 503.85,475.88 503.40,469.61 503.00,463.22 502.66,456.73 502.36,450.16 502.12,443.51 501.94,436.81 501.80,430.06 501.72,423.29 501.69,416.50 501.72,409.71 501.80,402.94 501.94,396.19 502.12,389.49 502.36,382.84 502.66,376.27 503.00,369.78 503.40,363.39 503.85,357.12 504.34,350.97 504.89,344.96 505.48,339.11 506.12,333.42 506.80,327.91 507.52,322.58 508.29,317.46 509.10,312.55 509.94,307.86 510.82,303.40 511.74,299.19 512.69,295.22 513.67,291.51 514.67,288.07 515.71,284.91 516.76,282.02 517.84,279.42 518.94,277.12 520.06,275.11 521.19,273.40 522.33,272.00" fill="url(#gp)"/>
<polygon points="526.97,269.50 525.65,269.70 524.33,270.31 523.02,271.31 521.72,272.71 520.43,274.51 519.16,276.69 517.91,279.26 516.69,282.21 515.50,285.52 514.33,289.19 513.20,293.22 512.11,297.57 511.06,302.26 510.06,307.26 509.10,312.56 508.19,318.14 507.33,323.99 506.52,330.10 505.77,336.44 505.08,343.00 504.45,349.76 503.88,356.71 503.37,363.82 502.93,371.07 502.55,378.45 502.25,385.94 502.00,393.50 501.83,401.13 501.73,408.81 501.69,416.50 501.73,424.19 501.83,431.87 502.00,439.50 502.25,447.06 502.55,454.55 502.93,461.93 503.37,469.18 503.88,476.29 504.45,483.24 505.08,490.00 505.77,496.56 506.52,502.90 507.33,509.01 508.19,514.86 509.10,520.44 510.06,525.74 511.06,530.74 512.11,535.43 513.20,539.78 514.33,543.81 515.50,547.48 516.69,550.79 517.91,553.74 519.16,556.31 520.43,558.49 521.72,560.29 523.02,561.69 524.33,562.69 525.65,563.30 526.97,563.50 537.19,563.50 535.99,563.30 534.80,562.69 533.61,561.69 532.43,560.29 531.26,558.49 530.12,556.31 528.99,553.74 527.88,550.79 526.80,547.48 525.75,543.81 524.72,539.78 523.74,535.43 522.79,530.74 521.87,525.74 521.01,520.44 520.18,514.86 519.40,509.01 518.67,502.90 518.00,496.56 517.37,490.00 516.80,483.24 516.28,476.29 515.82,469.18 515.42,461.93 515.08,454.55 514.80,447.06 514.59,439.50 514.43,431.87 514.33,424.19 514.30,416.50 514.33,408.81 514.43,401.13 514.59,393.50 514.80,385.94 515.08,378.45 515.42,371.07 515.82,363.82 516.28,356.71 516.80,349.76 517.37,343.00 518.00,336.44 518.67,330.10 519.40,323.99 520.18,318.14 521.01,312.56 521.87,307.26 522.79,302.26 523.74,297.57 524.72,293.22 525.75,289.19 526.80,285.52 527.88,282.21 528.99,279.26 530.12,276.69 531.26,274.51 532.43,272.71 533.61,271.31 534.80,270.31 535.99,269.70 537.19,269.50" fill="url(#gr)"/>
<polygon points="537.19,269.50 535.99,269.70 534.80,270.31 533.61,271.31 532.43,272.71 531.26,274.51 530.12,276.69 528.99,279.26 527.88,282.21 526.80,285.52 525.75,289.19 524.72,293.22 523.74,297.57 522.79,302.26 521.87,307.26 521.01,312.56 520.18,318.14 519.40,323.99 518.67,330.10 518.00,336.44 517.37,343.00 516.80,349.76 516.28,356.71 515.82,363.82 515.42,371.07 515.08,378.45 514.80,385.94 514.59,393.50 514.43,401.13 514.33,408.81 514.30,416.50 514.33,424.19 514.43,431.87 514.59,439.50 514.80,447.06 515.08,454.55 515.42,461.93 515.82,469.18 516.28,476.29 516.80,483.24 517.37,490.00 518.00,496.56 518.67,502.90 519.40,509.01 520.18,514.86 521.01,520.44 521.87,525.74 522.79,530.74 523.74,535.43 524.72,539.78 525.75,543.81 526.80,547.48 527.88,550.79 528.99,553.74 530.12,556.31 531.26,558.49 532.43,560.29 533.61,561.69 534.80,562.69 535.99,563.30 537.19,563.50 540.43,563.50 539.27,563.30 538.12,562.69 536.97,561.69 535.83,560.29 534.70,558.49 533.59,556.31 532.50,553.74 531.43,550.79 530.39,547.48 529.37,543.81 528.38,539.78 527.43,535.43 526.51,530.74 525.63,525.74 524.79,520.44 523.99,514.86 523.24,509.01 522.53,502.90 521.88,496.56 521.27,490.00 520.72,483.24 520.22,476.29 519.78,469.18 519.39,461.93 519.06,454.55 518.79,447.06 518.58,439.50 518.43,431.87 518.34,424.19 518.31,416.50 518.34,408.81 518.43,401.13 518.58,393.50 518.79,385.94 519.06,378.45 519.39,371.07 519.78,363.82 520.22,356.71 520.72,349.76 521.27,343.00 521.88,336.44 522.53,330.10 523.24,323.99 523.99,318.14 524.79,312.56 525.63,307.26 526.51,302.26 527.43,297.57 528.38,293.22 529.37,289.19 530.39,285.52 531.43,282.21 532.50,279.26 533.59,276.69 534.70,274.51 535.83,272.71 536.97,271.31 538.12,270.31 539.27,269.70 540.43,269.50" fill="#b2b2b2"/>
<polygon points="536.37,272.00 535.37,273.40 534.38,275.11 533.40,277.12 532.44,279.42 531.50,282.02 530.57,284.91 529.67,288.07 528.79,291.51 527.93,295.22 527.10,299.19 526.30,303.40 525.53,307.86 524.79,312.55 524.08,317.46 523.41,322.58 522.78,327.91 522.18,333.42 521.62,339.11 521.10,344.96 520.63,350.97 520.19,357.12 519.80,363.39 519.45,369.78 519.15,376.27 518.89,382.84 518.68,389.49 518.52,396.19 518.40,402.94 518.33,409.71 518.31,416.50 518.33,423.29 518.40,430.06 518.52,436.81 518.68,443.51 518.89,450.16 519.15,456.73 519.45,463.22 519.80,469.61 520.19,475.88 520.63,482.03 521.10,488.04 521.62,493.89 522.18,499.58 522.78,505.09 523.41,510.42 524.08,515.54 524.79,520.45 525.53,525.14 526.30,529.60 527.10,533.81 527.93,537.78 528.79,541.49 529.67,544.93 530.57,548.09 531.50,550.98 532.44,553.58 533.40,555.88 534.38,557.89 535.37,559.60 536.37,561.00 548.46,561.00 547.58,559.60 546.72,557.89 545.86,555.88 545.02,553.58 544.19,550.98 543.38,548.09 542.58,544.93 541.81,541.49 541.06,537.78 540.33,533.81 539.63,529.60 538.95,525.14 538.30,520.45 537.68,515.54 537.10,510.42 536.54,505.09 536.01,499.58 535.53,493.89 535.07,488.04 534.65,482.03 534.27,475.88 533.93,469.61 533.62,463.22 533.36,456.73 533.13,450.16 532.95,443.51 532.80,436.81 532.70,430.06 532.64,423.29 532.62,416.50 532.64,409.71 532.70,402.94 532.80,396.19 532.95,389.49 533.13,382.84 533.36,376.27 533.62,369.78 533.93,363.39 534.27,357.12 534.65,350.97 535.07,344.96 535.53,339.11 536.01,333.42 536.54,327.91 537.10,322.58 537.68,317.46 538.30,312.55 538.95,307.86 539.63,303.40 540.33,299.19 541.06,295.22 541.81,291.51 542.58,288.07 543.38,284.91 544.19,282.02 545.02,279.42 545.86,277.12 546.72,275.11 547.58,273.40 548.46,272.00" fill="url(#gp)"/>
<polygon points="548.46,272.00 547.58,273.40 546.72,275.11 545.86,277.12 545.02,279.42 544.19,282.02 543.38,284.91 542.58,288.07 541.81,291.51 541.06,295.22 540.33,299.19 539.63,303.40 538.95,307.86 538.30,312.55 537.68,317.46 537.10,322.58 536.54,327.91 536.01,333.42 535.53,339.11 535.07,344.96 534.65,350.97 534.27,357.12 533.93,363.39 533.62,369.78 533.36,376.27 533.13,382.84 532.95,389.49 532.80,396.19 532.70,402.94 532.64,409.71 532.62,416.50 532.64,423.29 532.70,430.06 532.80,436.81 532.95,443.51 533.13,450.16 533.36,456.73 533.62,463.22 533.93,469.61 534.27,475.88 534.65,482.03 535.07,488.04 535.53,493.89 536.01,499.58 536.54,505.09 537.10,510.42 537.68,515.54 538.30,520.45 538.95,525.14 539.63,529.60 540.33,533.81 541.06,537.78 541.81,541.49 542.58,544.93 543.38,548.09 544.19,550.98 545.02,553.58 545.86,555.88 546.72,557.89 547.58,559.60 548.46,561.00 551.25,561.00 550.40,559.60 549.56,557.89 548.73,555.88 547.92,553.58 547.12,550.98 546.33,548.09 545.56,544.93 544.82,541.49 544.09,537.78 543.38,533.81 542.70,529.60 542.05,525.14 541.42,520.45 540.82,515.54 540.25,510.42 539.71,505.09 539.21,499.58 538.73,493.89 538.29,488.04 537.89,482.03 537.52,475.88 537.19,469.61 536.89,463.22 536.64,456.73 536.42,450.16 536.24,443.51 536.10,436.81 536.00,430.06 535.94,423.29 535.92,416.50 535.94,409.71 536.00,402.94 536.10,396.19 536.24,389.49 536.42,382.84 536.64,376.27 536.89,369.78 537.19,363.39 537.52,357.12 537.89,350.97 538.29,344.96 538.73,339.11 539.21,333.42 539.71,327.91 540.25,322.58 540.82,317.46 541.42,312.55 542.05,307.86 542.70,303.40 543.38,299.19 544.09,295.22 544.82,291.51 545.56,288.07 546.33,284.91 547.12,282.02 547.92,279.42 548.73,277.12 549.56,275.11 550.40,273.40 551.25,272.00" fill="url(#lt)"/>
<polygon points="551.25,272.00 550.40,273.40 549.56,275.11 548.73,277.12 547.92,279.42 547.12,282.02 546.33,284.91 545.56,288.07 544.82,291.51 544.09,295.22 543.38,299.19 542.70,303.40 542.05,307.86 541.42,312.55 540.82,317.46 540.25,322.58 539.71,327.91 539.21,333.42 538.73,339.11 538.29,344.96 537.89,350.97 537.52,357.12 537.19,363.39 536.89,369.78 536.64,376.27 536.42,382.84 536.24,389.49 536.10,396.19 536.00,402.94 535.94,409.71 535.92,416.50 535.94,423.29 536.00,430.06 536.10,436.81 536.24,443.51 536.42,450.16 536.64,456.73 536.89,463.22 537.19,469.61 537.52,475.88 537.89,482.03 538.29,488.04 538.73,493.89 539.21,499.58 539.71,505.09 540.25,510.42 540.82,515.54 541.42,520.45 542.05,525.14 542.70,529.60 543.38,533.81 544.09,537.78 544.82,541.49 545.56,544.93 546.33,548.09 547.12,550.98 547.92,553.58 548.73,555.88 549.56,557.89 550.40,559.60 551.25,561.00 556.66,561.00 555.87,559.60 555.08,557.89 554.31,555.88 553.55,553.58 552.80,550.98 552.06,548.09 551.34,544.93 550.64,541.49 549.96,537.78 549.31,533.81 548.67,529.60 548.06,525.14 547.47,520.45 546.91,515.54 546.38,510.42 545.87,505.09 545.40,499.58 544.96,493.89 544.55,488.04 544.17,482.03 543.82,475.88 543.51,469.61 543.24,463.22 543.00,456.73 542.79,450.16 542.62,443.51 542.49,436.81 542.40,430.06 542.34,423.29 542.33,416.50 542.34,409.71 542.40,402.94 542.49,396.19 542.62,389.49 542.79,382.84 543.00,376.27 543.24,369.78 543.51,363.39 543.82,357.12 544.17,350.97 544.55,344.96 544.96,339.11 545.40,333.42 545.87,327.91 546.38,322.58 546.91,317.46 547.47,312.55 548.06,307.86 548.67,303.40 549.31,299.19 549.96,295.22 550.64,291.51 551.34,288.07 552.06,284.91 552.80,282.02 553.55,279.42 554.31,277.12 555.08,275.11 555.87,273.40 556.66,272.00" fill="url(#gr)"/>
<polygon points="556.66,272.00 555.87,273.40 555.08,275.11 554.31,277.12 553.55,279.42 552.80,282.02 552.06,284.91 551.34,288.07 550.64,291.51 549.96,295.22 549.31,299.19 548.67,303.40 548.06,307.86 547.47,312.55 546.91,317.46 546.38,322.58 545.87,327.91 545.40,333.42 544.96,339.11 544.55,344.96 544.17,350.97 543.82,357.12 543.51,363.39 543.24,369.78 543.00,376.27 542.79,382.84 542.62,389.49 542.49,396.19 542.40,402.94 542.34,409.71 542.33,416.50 542.34,423.29 542.40,430.06 542.49,436.81 542.62,443.51 542.79,450.16 543.00,456.73 543.24,463.22 543.51,469.61 543.82,475.88 544.17,482.03 544.55,488.04 544.96,493.89 545.40,499.58 545.87,505.09 546.38,510.42 546.91,515.54 547.47,520.45 548.06,525.14 548.67,529.60 549.31,533.81 549.96,537.78 550.64,541.49 551.34,544.93 552.06,548.09 552.80,550.98 553.55,553.58 554.31,555.88 555.08,557.89 555.87,559.60 556.66,561.00 560.55,561.00 559.80,559.60 559.05,557.89 558.32,555.88 557.59,553.58 556.88,550.98 556.18,548.09 555.50,544.93 554.83,541.49 554.19,537.78 553.56,533.81 552.96,529.60 552.38,525.14 551.82,520.45 551.29,515.54 550.78,510.42 550.30,505.09 549.85,499.58 549.43,493.89 549.04,488.04 548.68,482.03 548.35,475.88 548.06,469.61 547.79,463.22 547.57,456.73 547.37,450.16 547.21,443.51 547.09,436.81 547.00,430.06 546.95,423.29 546.93,416.50 546.95,409.71 547.00,402.94 547.09,396.19 547.21,389.49 547.37,382.84 547.57,376.27 547.79,369.78 548.06,363.39 548.35,357.12 548.68,350.97 549.04,344.96 549.43,339.11 549.85,333.42 550.30,327.91 550.78,322.58 551.29,317.46 551.82,312.55 552.38,307.86 552.96,303.40 553.56,299.19 554.19,295.22 554.83,291.51 555.50,288.07 556.18,284.91 556.88,282.02 557.59,279.42 558.32,277.12 559.05,275.11 559.80,273.40 560.55,272.00" fill="#b0b0b0"/>
<polygon points="560.55,272.00 559.80,273.40 559.05,275.11 558.32,277.12 557.59,279.42 556.88,282.02 556.18,284.91 555.50,288.07 554.83,291.51 554.19,295.22 553.56,299.19 552.96,303.40 552.38,307.86 551.82,312.55 551.29,317.46 550.78,322.58 550.30,327.91 549.85,333.42 549.43,339.11 549.04,344.96 548.68,350.97 548.35,357.12 548.06,363.39 547.79,369.78 547.57,376.27 547.37,382.84 547.21,389.49 547.09,396.19 547.00,402.94 546.95,409.71 546.93,416.50 546.95,423.29 547.00,430.06 547.09,436.81 547.21,443.51 547.37,450.16 547.57,456.73 547.79,463.22 548.06,469.61 548.35,475.88 548.68,482.03 549.04,488.04 549.43,493.89 549.85,499.58 550.30,505.09 550.78,510.42 551.29,515.54 551.82,520.45 552.38,525.14 552.96,529.60 553.56,533.81 554.19,537.78 554.83,541.49 555.50,544.93 556.18,548.09 556.88,550.98 557.59,553.58 558.32,555.88 559.05,557.89 559.80,559.60 560.55,561.00 584.23,561.00 583.72,559.60 583.21,557.89 582.71,555.88 582.22,553.58 581.73,550.98 581.25,548.09 580.79,544.93 580.34,541.49 579.90,537.78 579.47,533.81 579.06,529.60 578.66,525.14 578.28,520.45 577.92,515.54 577.58,510.42 577.25,505.09 576.94,499.58 576.66,493.89 576.39,488.04 576.14,482.03 575.92,475.88 575.72,469.61 575.54,463.22 575.39,456.73 575.25,450.16 575.15,443.51 575.06,436.81 575.00,430.06 574.96,423.29 574.95,416.50 574.96,409.71 575.00,402.94 575.06,396.19 575.15,389.49 575.25,382.84 575.39,376.27 575.54,369.78 575.72,363.39 575.92,357.12 576.14,350.97 576.39,344.96 576.66,339.11 576.94,333.42 577.25,327.91 577.58,322.58 577.92,317.46 578.28,312.55 578.66,307.86 579.06,303.40 579.47,299.19 579.90,295.22 580.34,291.51 580.79,288.07 581.25,284.91 581.73,282.02 582.22,279.42 582.71,277.12 583.21,275.11 583.72,273.40 584.23,272.00" fill="#8b8bb0"/>
</g>
<g transform="translate(1417.0 0) scale(-1 1)">
<polygon points="476.83,272.00 475.23,273.40 473.64,275.11 472.07,277.12 470.53,279.42 469.01,282.02 467.53,284.91 466.08,288.07 464.66,291.51 463.29,295.22 461.96,299.19 460.67,303.40 459.44,307.86 458.25,312.55 457.12,317.46 456.04,322.58 455.02,327.91 454.06,333.42 453.17,339.11 452.34,344.96 451.57,350.97 450.88,357.12 450.25,363.39 449.69,369.78 449.21,376.27 448.79,382.84 448.45,389.49 448.19,396.19 448.00,402.94 447.89,409.71 447.85,416.50 447.89,423.29 448.00,430.06 448.19,436.81 448.45,443.51 448.79,450.16 449.21,456.73 449.69,463.22 450.25,469.61 450.88,475.88 451.57,482.03 452.34,488.04 453.17,493.89 454.06,499.58 455.02,505.09 456.04,510.42 457.12,515.54 458.25,520.45 459.44,525.14 460.67,529.60 461.96,533.81 463.29,537.78 464.66,541.49 466.08,544.93 467.53,548.09 469.01,550.98 470.53,553.58 472.07,555.88 473.64,557.89 475.23,559.60 476.83,561.00 478.27,561.00 476.68,559.60 475.11,557.89 473.55,555.88 472.02,553.58 470.52,550.98 469.05,548.09 467.61,544.93 466.21,541.49 464.85,537.78 463.53,533.81 462.26,529.60 461.03,525.14 459.86,520.45 458.73,515.54 457.67,510.42 456.66,505.09 455.71,499.58 454.82,493.89 454.00,488.04 453.24,482.03 452.55,475.88 451.93,469.61 451.38,463.22 450.89,456.73 450.49,450.16 450.15,443.51 449.89,436.81 449.70,430.06 449.59,423.29 449.55,416.50 449.59,409.71 449.70,402.94 449.89,396.19 450.15,389.49 450.49,382.84 450.89,376.27 451.38,369.78 451.93,363.39 452.55,357.12 453.24,350.97 454.00,344.96 454.82,339.11 455.71,333.42 456.66,327.91 457.67,322.58 458.73,317.46 459.86,312.55 461.03,307.86 462.26,303.40 463.53,299.19 464.85,295.22 466.21,291.51 467.61,288.07 469.05,284.91 470.52,282.02 472.02,279.42 473.55,277.12 475.11,275.11 476.68,273.40 478.27,272.00" fill="#5a5a88"/>
<polygon points="478.27,272.00 476.68,273.40 475.11,275.11 473.55,277.12 472.02,279.42 470.52,282.02 469.05,284.91 467.61,288.07 466.21,291.51 464.85,295.22 463.53,299.19 462.26,303.40 461.03,307.86 459.86,312.55 458.73,317.46 457.67,322.58 456.66,327.91 455.71,333.42 454.82,339.11 454.00,344.96 453.24,350.97 452.55,357.12 451.93,363.39 451.38,369.78 450.89,376.27 450.49,382.84 450.15,389.49 449.89,396.19 449.70,402.94 449.59,409.71 449.55,416.50 449.59,423.29 449.70,430.06 449.89,436.81 450.15,443.51 450.49,450.16 450.89,456.73 451.38,463.22 451.93,469.61 452.55,475.88 453.24,482.03 454.00,488.04 454.82,493.89 455.71,499.58 456.66,505.09 457.67,510.42 458.73,515.54 459.86,520.45 461.03,525.14 462.26,529.60 463.53,533.81 464.85,537.78 466.21,541.49 467.61,544.93 469.05,548.09 470.52,550.98 472.02,553.58 473.55,555.88 475.11,557.89 476.68,559.60 478.27,561.00 481.06,561.00 479.50,559.60 477.95,557.89 476.43,555.88 474.93,553.58 473.45,550.98 472.01,548.09 470.59,544.93 469.22,541.49 467.88,537.78 466.58,533.81 465.33,529.60 464.13,525.14 462.97,520.45 461.87,515.54 460.82,510.42 459.83,505.09 458.90,499.58 458.03,493.89 457.22,488.04 456.48,482.03 455.80,475.88 455.19,469.61 454.65,463.22 454.17,456.73 453.77,450.16 453.44,443.51 453.19,436.81 453.00,430.06 452.89,423.29 452.85,416.50 452.89,409.71 453.00,402.94 453.19,396.19 453.44,389.49 453.77,382.84 454.17,376.27 454.65,369.78 455.19,363.39 455.80,357.12 456.48,350.97 457.22,344.96 458.03,339.11 458.90,333.42 459.83,327.91 460.82,322.58 461.87,317.46 462.97,312.55 464.13,307.86 465.33,303.40 466.58,299.19 467.88,295.22 469.22,291.51 470.59,288.07 472.01,284.91 473.45,282.02 474.93,279.42 476.43,277.12 477.95,275.11 479.50,273.40 481.06,272.00" fill="url(#lt)"/>
<polygon points="487.40,269.50 485.60,269.70 483.79,270.31 482.00,271.31 480.22,272.71 478.46,274.51 476.73,276.69 475.02,279.26 473.35,282.21 471.72,285.52 470.13,289.19 468.59,293.22 467.10,297.57 465.66,302.26 464.29,307.26 462.97,312.56 461.73,318.14 460.55,323.99 459.45,330.10 458.43,336.44 457.48,343.00 456.62,349.76 455.84,356.71 455.15,363.82 454.54,371.07 454.03,378.45 453.61,385.94 453.28,393.50 453.04,401.13 452.90,408.81 452.85,416.50 452.90,424.19 453.04,431.87 453.28,439.50 453.61,447.06 454.03,454.55 454.54,461.93 455.15,469.18 455.84,476.29 456.62,483.24 457.48,490.00 458.43,496.56 459.45,502.90 460.55,509.01 461.73,514.86 462.97,520.44 464.29,525.74 465.66,530.74 467.10,535.43 468.59,539.78 470.13,543.81 471.72,547.48 473.35,550.79 475.02,553.74 476.73,556.31 478.46,558.49 480.22,560.29 482.00,561.69 483.79,562.69 485.60,563.30 487.40,563.50 497.70,563.50 496.02,563.30 494.34,562.69 492.67,561.69 491.02,560.29 489.38,558.49 487.77,556.31 486.18,553.74 484.63,550.79 483.11,547.48 481.63,543.81 480.20,539.78 478.81,535.43 477.48,530.74 476.20,525.74 474.98,520.44 473.82,514.86 472.73,509.01 471.70,502.90 470.75,496.56 469.87,490.00 469.07,483.24 468.34,476.29 467.70,469.18 467.14,461.93 466.66,454.55 466.27,447.06 465.96,439.50 465.74,431.87 465.61,424.19 465.56,416.50 465.61,408.81 465.74,401.13 465.96,393.50 466.27,385.94 466.66,378.45 467.14,371.07 467.70,363.82 468.34,356.71 469.07,349.76 469.87,343.00 470.75,336.44 471.70,330.10 472.73,323.99 473.82,318.14 474.98,312.56 476.20,307.26 477.48,302.26 478.81,297.57 480.20,293.22 481.63,289.19 483.11,285.52 484.63,282.21 486.18,279.26 487.77,276.69 489.38,274.51 491.02,272.71 492.67,271.31 494.34,270.31 496.02,269.70 497.70,269.50" fill="url(#gr)"/>
<polygon points="497.70,269.50 496.02,269.70 494.34,270.31 492.67,271.31 491.02,272.71 489.38,274.51 487.77,276.69 486.18,279.26 484.63,282.21 483.11,285.52 481.63,289.19 480.20,293.22 478.81,297.57 477.48,302.26 476.20,307.26 474.98,312.56 473.82,318.14 472.73,323.99 471.70,330.10 470.75,336.44 469.87,343.00 469.07,349.76 468.34,356.71 467.70,363.82 467.14,371.07 466.66,378.45 466.27,385.94 465.96,393.50 465.74,401.13 465.61,408.81 465.56,416.50 465.61,424.19 465.74,431.87 465.96,439.50 466.27,447.06 466.66,454.55 467.14,461.93 467.70,469.18 468.34,476.29 469.07,483.24 469.87,490.00 470.75,496.56 471.70,502.90 472.73,509.01 473.82,514.86 474.98,520.44 476.20,525.74 477.48,530.74 478.81,535.43 480.20,539.78 481.63,543.81 483.11,547.48 484.63,550.79 486.18,553.74 487.77,556.31 489.38,558.49 491.02,560.29 492.67,561.69 494.34,562.69 496.02,563.30 497.70,563.50 498.43,563.50 496.76,563.30 495.09,562.69 493.43,561.69 491.78,560.29 490.16,558.49 488.55,556.31 486.98,553.74 485.43,550.79 483.92,547.48 482.45,543.81 481.02,539.78 479.64,535.43 478.31,530.74 477.04,525.74 475.83,520.44 474.68,514.86 473.59,509.01 472.57,502.90 471.62,496.56 470.75,490.00 469.95,483.24 469.23,476.29 468.59,469.18 468.03,461.93 467.55,454.55 467.16,447.06 466.86,439.50 466.64,431.87 466.51,424.19 466.46,416.50 466.51,408.81 466.64,401.13 466.86,393.50 467.16,385.94 467.55,378.45 468.03,371.07 468.59,363.82 469.23,356.71 469.95,349.76 470.75,343.00 471.62,336.44 472.57,330.10 473.59,323.99 474.68,318.14 475.83,312.56 477.04,307.26 478.31,302.26 479.64,297.57 481.02,293.22 482.45,289.19 483.92,285.52 485.43,282.21 486.98,279.26 488.55,276.69 490.16,274.51 491.78,272.71 493.43,271.31 495.09,270.31 496.76,269.70 498.43,269.50" fill="#c4c4c4"/>
<polygon points="492.56,272.00 491.12,273.40 489.69,275.11 488.28,277.12 486.89,279.42 485.52,282.02 484.18,284.91 482.88,288.07 481.61,291.51 480.37,295.22 479.17,299.19 478.01,303.40 476.90,307.86 475.83,312.55 474.81,317.46 473.84,322.58 472.92,327.91 472.06,333.42 471.25,339.11 470.51,344.96 469.82,350.97 469.19,357.12 468.62,363.39 468.12,369.78 467.69,376.27 467.31,382.84 467.01,389.49 466.77,396.19 466.60,402.94 466.50,409.71 466.46,416.50 466.50,423.29 466.60,430.06 466.77,436.81 467.01,443.51 467.31,450.16 467.69,456.73 468.12,463.22 468.62,469.61 469.19,475.88 469.82,482.03 470.51,488.04 471.25,493.89 472.06,499.58 472.92,505.09 473.84,510.42 474.81,515.54 475.83,520.45 476.90,525.14 478.01,529.60 479.17,533.81 480.37,537.78 481.61,541.49 482.88,544.93 484.18,548.09 485.52,550.98 486.89,553.58 488.28,555.88 489.69,557.89 491.12,559.60 492.56,561.00 497.13,561.00 495.73,559.60 494.35,557.89 492.98,555.88 491.64,553.58 490.31,550.98 489.02,548.09 487.76,544.93 486.52,541.49 485.33,537.78 484.17,533.81 483.04,529.60 481.97,525.14 480.93,520.45 479.95,515.54 479.01,510.42 478.12,505.09 477.28,499.58 476.50,493.89 475.78,488.04 475.11,482.03 474.51,475.88 473.96,469.61 473.47,463.22 473.05,456.73 472.69,450.16 472.40,443.51 472.17,436.81 472.00,430.06 471.90,423.29 471.87,416.50 471.90,409.71 472.00,402.94 472.17,396.19 472.40,389.49 472.69,382.84 473.05,376.27 473.47,369.78 473.96,363.39 474.51,357.12 475.11,350.97 475.78,344.96 476.50,339.11 477.28,333.42 478.12,327.91 479.01,322.58 479.95,317.46 480.93,312.55 481.97,307.86 483.04,303.40 484.17,299.19 485.33,295.22 486.52,291.51 487.76,288.07 489.02,284.91 490.31,282.02 491.64,279.42 492.98,277.12 494.35,275.11 495.73,273.40 497.13,272.00" fill="url(#gp)"/>
<polygon points="497.13,272.00 495.73,273.40 494.35,275.11 492.98,277.12 491.64,279.42 490.31,282.02 489.02,284.91 487.76,288.07 486.52,291.51 485.33,295.22 484.17,299.19 483.04,303.40 481.97,307.86 480.93,312.55 479.95,317.46 479.01,322.58 478.12,327.91 477.28,333.42 476.50,339.11 475.78,344.96 475.11,350.97 474.51,357.12 473.96,363.39 473.47,369.78 473.05,376.27 472.69,382.84 472.40,389.49 472.17,396.19 472.00,402.94 471.90,409.71 471.87,416.50 471.90,423.29 472.00,430.06 472.17,436.81 472.40,443.51 472.69,450.16 473.05,456.73 473.47,463.22 473.96,469.61 474.51,475.88 475.11,482.03 475.78,488.04 476.50,493.89 477.28,499.58 478.12,505.09 479.01,510.42 479.95,515.54 480.93,520.45 481.97,525.14 483.04,529.60 484.17,533.81 485.33,537.78 486.52,541.49 487.76,544.93 489.02,548.09 490.31,550.98 491.64,553.58 492.98,555.88 494.35,557.89 495.73,559.60 497.13,561.00 499.66,561.00 498.29,559.60 496.93,557.89 495.59,555.88 494.27,553.58 492.98,550.98 491.71,548.09 490.47,544.93 489.26,541.49 488.08,537.78 486.94,533.81 485.84,529.60 484.78,525.14 483.77,520.45 482.80,515.54 481.88,510.42 481.01,505.09 480.19,499.58 479.42,493.89 478.71,488.04 478.06,482.03 477.46,475.88 476.92,469.61 476.45,463.22 476.03,456.73 475.68,450.16 475.39,443.51 475.16,436.81 475.00,430.06 474.90,423.29 474.87,416.50 474.90,409.71 475.00,402.94 475.16,396.19 475.39,389.49 475.68,382.84 476.03,376.27 476.45,369.78 476.92,363.39 477.46,357.12 478.06,350.97 478.71,344.96 479.42,339.11 480.19,333.42 481.01,327.91 481.88,322.58 482.80,317.46 483.77,312.55 484.78,307.86 485.84,303.40 486.94,299.19 488.08,295.22 489.26,291.51 490.47,288.07 491.71,284.91 492.98,282.02 494.27,279.42 495.59,277.12 496.93,275.11 498.29,273.40 499.66,272.00" fill="url(#lt)"/>
<polygon points="505.24,269.50 503.65,269.70 502.07,270.31 500.49,271.31 498.93,272.71 497.38,274.51 495.86,276.69 494.36,279.26 492.89,282.21 491.45,285.52 490.06,289.19 488.70,293.22 487.39,297.57 486.13,302.26 484.92,307.26 483.77,312.56 482.67,318.14 481.64,323.99 480.67,330.10 479.77,336.44 478.94,343.00 478.18,349.76 477.50,356.71 476.89,363.82 476.36,371.07 475.91,378.45 475.54,385.94 475.25,393.50 475.04,401.13 474.91,408.81 474.87,416.50 474.91,424.19 475.04,431.87 475.25,439.50 475.54,447.06 475.91,454.55 476.36,461.93 476.89,469.18 477.50,476.29 478.18,483.24 478.94,490.00 479.77,496.56 480.67,502.90 481.64,509.01 482.67,514.86 483.77,520.44 484.92,525.74 486.13,530.74 487.39,535.43 488.70,539.78 490.06,543.81 491.45,547.48 492.89,550.79 494.36,553.74 495.86,556.31 497.38,558.49 498.93,560.29 500.49,561.69 502.07,562.69 503.65,563.30 505.24,563.50 515.38,563.50 513.91,563.30 512.45,562.69 511.00,561.69 509.56,560.29 508.13,558.49 506.73,556.31 505.34,553.74 503.99,550.79 502.67,547.48 501.38,543.81 500.13,539.78 498.92,535.43 497.76,530.74 496.64,525.74 495.58,520.44 494.57,514.86 493.62,509.01 492.73,502.90 491.90,496.56 491.13,490.00 490.43,483.24 489.80,476.29 489.24,469.18 488.75,461.93 488.34,454.55 487.99,447.06 487.73,439.50 487.54,431.87 487.42,424.19 487.38,416.50 487.42,408.81 487.54,401.13 487.73,393.50 487.99,385.94 488.34,378.45 488.75,371.07 489.24,363.82 489.80,356.71 490.43,349.76 491.13,343.00 491.90,336.44 492.73,330.10 493.62,323.99 494.57,318.14 495.58,312.56 496.64,307.26 497.76,302.26 498.92,297.57 500.13,293.22 501.38,289.19 502.67,285.52 503.99,282.21 505.34,279.26 506.73,276.69 508.13,274.51 509.56,272.71 511.00,271.31 512.45,270.31 513.91,269.70 515.38,269.50" fill="url(#gr)"/>
<polygon points="515.38,269.50 513.91,269.70 512.45,270.31 511.00,271.31 509.56,272.71 508.13,274.51 506.73,276.69 505.34,279.26 503.99,282.21 502.67,285.52 501.38,289.19 500.13,293.22 498.92,297.57 497.76,302.26 496.64,307.26 495.58,312.56 494.57,318.14 493.62,323.99 492.73,330.10 491.90,336.44 491.13,343.00 490.43,349.76 489.80,356.71 489.24,363.82 488.75,371.07 488.34,378.45 487.99,385.94 487.73,393.50 487.54,401.13 487.42,408.81 487.38,416.50 487.42,424.19 487.54,431.87 487.73,439.50 487.99,447.06 488.34,454.55 488.75,461.93 489.24,469.18 489.80,476.29 490.43,483.24 491.13,490.00 491.90,496.56 492.73,502.90 493.62,509.01 494.57,514.86 495.58,520.44 496.64,525.74 497.76,530.74 498.92,535.43 500.13,539.78 501.38,543.81 502.67,547.48 503.99,550.79 505.34,553.74 506.73,556.31 508.13,558.49 509.56,560.29 511.00,561.69 512.45,562.69 513.91,563.30 515.38,563.50 516.11,563.50 514.65,563.30 513.20,562.69 511.75,561.69 510.32,560.29 508.91,558.49 507.51,556.31 506.14,553.74 504.79,550.79 503.47,547.48 502.19,543.81 500.95,539.78 499.75,535.43 498.60,530.74 497.49,525.74 496.43,520.44 495.43,514.86 494.48,509.01 493.60,502.90 492.77,496.56 492.01,490.00 491.32,483.24 490.69,476.29 490.13,469.18 489.64,461.93 489.23,454.55 488.89,447.06 488.62,439.50 488.43,431.87 488.32,424.19 488.28,416.50 488.32,408.81 488.43,401.13 488.62,393.50 488.89,385.94 489.23,378.45 489.64,371.07 490.13,363.82 490.69,356.71 491.32,349.76 492.01,343.00 492.77,336.44 493.60,330.10 494.48,323.99 495.43,318.14 496.43,312.56 497.49,307.26 498.60,302.26 499.75,297.57 500.95,293.22 502.19,289.19 503.47,285.52 504.79,282.21 506.14,279.26 507.51,276.69 508.91,274.51 510.32,272.71 511.75,271.31 513.20,270.31 514.65,269.70 516.11,269.50" fill="#c4c4c4"/>
<polygon points="511.00,272.00 509.74,273.40 508.49,275.11 507.27,277.12 506.06,279.42 504.87,282.02 503.71,284.91 502.57,288.07 501.46,291.51 500.38,295.22 499.34,299.19 498.33,303.40 497.36,307.86 496.43,312.55 495.55,317.46 494.70,322.58 493.90,327.91 493.15,333.42 492.45,339.11 491.80,344.96 491.20,350.97 490.65,357.12 490.16,363.39 489.73,369.78 489.34,376.27 489.02,382.84 488.76,389.49 488.55,396.19 488.40,402.94 488.31,409.71 488.28,416.50 488.31,423.29 488.40,430.06 488.55,436.81 488.76,443.51 489.02,450.16 489.34,456.73 489.73,463.22 490.16,469.61 490.65,475.88 491.20,482.03 491.80,488.04 492.45,493.89 493.15,499.58 493.90,505.09 494.70,510.42 495.55,515.54 496.43,520.45 497.36,525.14 498.33,529.60 499.34,533.81 500.38,537.78 501.46,541.49 502.57,544.93 503.71,548.09 504.87,550.98 506.06,553.58 507.27,555.88 508.49,557.89 509.74,559.60 511.00,561.00 522.33,561.00 521.19,559.60 520.06,557.89 518.94,555.88 517.84,553.58 516.76,550.98 515.71,548.09 514.67,544.93 513.67,541.49 512.69,537.78 511.74,533.81 510.82,529.60 509.94,525.14 509.10,520.45 508.29,515.54 507.52,510.42 506.80,505.09 506.12,499.58 505.48,493.89 504.89,488.04 504.34,482.03 503.85,475.88 503.40,469.61 503.00,463.22 502.66,456.73 502.36,450.16 502.12,443.51 501.94,436.81 501.80,430.06 501.72,423.29 501.69,416.50 501.72,409.71 501.80,402.94 501.94,396.19 502.12,389.49 502.36,382.84 502.66,376.27 503.00,369.78 503.40,363.39 503.85,357.12 504.34,350.97 504.89,344.96 505.48,339.11 506.12,333.42 506.80,327.91 507.52,322.58 508.29,317.46 509.10,312.55 509.94,307.86 510.82,303.40 511.74,299.19 512.69,295.22 513.67,291.51 514.67,288.07 515.71,284.91 516.76,282.02 517.84,279.42 518.94,277.12 520.06,275.11 521.19,273.40 522.33,272.00" fill="url(#gp)"/>
<polygon points="526.97,269.50 525.65,269.70 524.33,270.31 523.02,271.31 521.72,272.71 520.43,274.51 519.16,276.69 517.91,279.26 516.69,282.21 515.50,285.52 514.33,289.19 513.20,293.22 512.11,297.57 511.06,302.26 510.06,307.26 509.10,312.56 508.19,318.14 507.33,323.99 506.52,330.10 505.77,336.44 505.08,343.00 504.45,349.76 503.88,356.71 503.37,363.82 502.93,371.07 502.55,378.45 502.25,385.94 502.00,393.50 501.83,401.13 501.73,408.81 501.69,416.50 501.73,424.19 501.83,431.87 502.00,439.50 502.25,447.06 502.55,454.55 502.93,461.93 503.37,469.18 503.88,476.29 504.45,483.24 505.08,490.00 505.77,496.56 506.52,502.90 507.33,509.01 508.19,514.86 509.10,520.44 510.06,525.74 511.06,530.74 512.11,535.43 513.20,539.78 514.33,543.81 515.50,547.48 516.69,550.79 517.91,553.74 519.16,556.31 520.43,558.49 521.72,560.29 523.02,561.69 524.33,562.69 525.65,563.30 526.97,563.50 537.19,563.50 535.99,563.30 534.80,562.69 533.61,561.69 532.43,560.29 531.26,558.49 530.12,556.31 528.99,553.74 527.88,550.79 526.80,547.48 525.75,543.81 524.72,539.78 523.74,535.43 522.79,530.74 521.87,525.74 521.01,520.44 520.18,514.86 519.40,509.01 518.67,502.90 518.00,496.56 517.37,490.00 516.80,483.24 516.28,476.29 515.82,469.18 515.42,461.93 515.08,454.55 514.80,447.06 514.59,439.50 514.43,431.87 514.33,424.19 514.30,416.50 514.33,408.81 514.43,401.13 514.59,393.50 514.80,385.94 515.08,378.45 515.42,371.07 515.82,363.82 516.28,356.71 516.80,349.76 517.37,343.00 518.00,336.44 518.67,330.10 519.40,323.99 520.18,318.14 521.01,312.56 521.87,307.26 522.79,302.26 523.74,297.57 524.72,293.22 525.75,289.19 526.80,285.52 527.88,282.21 528.99,279.26 530.12,276.69 531.26,274.51 532.43,272.71 533.61,271.31 534.80,270.31 535.99,269.70 537.19,269.50" fill="url(#gr)"/>
<polygon points="537.19,269.50 535.99,269.70 534.80,270.31 533.61,271.31 532.43,272.71 531.26,274.51 530.12,276.69 528.99,279.26 527.88,282.21 526.80,285.52 525.75,289.19 524.72,293.22 523.74,297.57 522.79,302.26 521.87,307.26 521.01,312.56 520.18,318.14 519.40,323.99 518.67,330.10 518.00,336.44 517.37,343.00 516.80,349.76 516.28,356.71 515.82,363.82 515.42,371.07 515.08,378.45 514.80,385.94 514.59,393.50 514.43,401.13 514.33,408.81 514.30,416.50 514.33,424.19 514.43,431.87 514.59,439.50 514.80,447.06 515.08,454.55 515.42,461.93 515.82,469.18 516.28,476.29 516.80,483.24 517.37,490.00 518.00,496.56 518.67,502.90 519.40,509.01 520.18,514.86 521.01,520.44 521.87,525.74 522.79,530.74 523.74,535.43 524.72,539.78 525.75,543.81 526.80,547.48 527.88,550.79 528.99,553.74 530.12,556.31 531.26,558.49 532.43,560.29 533.61,561.69 534.80,562.69 535.99,563.30 537.19,563.50 540.43,563.50 539.27,563.30 538.12,562.69 536.97,561.69 535.83,560.29 534.70,558.49 533.59,556.31 532.50,553.74 531.43,550.79 530.39,547.48 529.37,543.81 528.38,539.78 527.43,535.43 526.51,530.74 525.63,525.74 524.79,520.44 523.99,514.86 523.24,509.01 522.53,502.90 521.88,496.56 521.27,490.00 520.72,483.24 520.22,476.29 519.78,469.18 519.39,461.93 519.06,454.55 518.79,447.06 518.58,439.50 518.43,431.87 518.34,424.19 518.31,416.50 518.34,408.81 518.43,401.13 518.58,393.50 518.79,385.94 519.06,378.45 519.39,371.07 519.78,363.82 520.22,356.71 520.72,349.76 521.27,343.00 521.88,336.44 522.53,330.10 523.24,323.99 523.99,318.14 524.79,312.56 525.63,307.26 526.51,302.26 527.43,297.57 528.38,293.22 529.37,289.19 530.39,285.52 531.43,282.21 532.50,279.26 533.59,276.69 534.70,274.51 535.83,272.71 536.97,271.31 538.12,270.31 539.27,269.70 540.43,269.50" fill="#b2b2b2"/>
<polygon points="536.37,272.00 535.37,273.40 534.38,275.11 533.40,277.12 532.44,279.42 531.50,282.02 530.57,284.91 529.67,288.07 528.79,291.51 527.93,295.22 527.10,299.19 526.30,303.40 525.53,307.86 524.79,312.55 524.08,317.46 523.41,322.58 522.78,327.91 522.18,333.42 521.62,339.11 521.10,344.96 520.63,350.97 520.19,357.12 519.80,363.39 519.45,369.78 519.15,376.27 518.89,382.84 518.68,389.49 518.52,396.19 518.40,402.94 518.33,409.71 518.31,416.50 518.33,423.29 518.40,430.06 518.52,436.81 518.68,443.51 518.89,450.16 519.15,456.73 519.45,463.22 519.80,469.61 520.19,475.88 520.63,482.03 521.10,488.04 521.62,493.89 522.18,499.58 522.78,505.09 523.41,510.42 524.08,515.54 524.79,520.45 525.53,525.14 526.30,529.60 527.10,533.81 527.93,537.78 528.79,541.49 529.67,544.93 530.57,548.09 531.50,550.98 532.44,553.58 533.40,555.88 534.38,557.89 535.37,559.60 536.37,561.00 548.46,561.00 547.58,559.60 546.72,557.89 545.86,555.88 545.02,553.58 544.19,550.98 543.38,548.09 542.58,544.93 541.81,541.49 541.06,537.78 540.33,533.81 539.63,529.60 538.95,525.14 538.30,520.45 537.68,515.54 537.10,510.42 536.54,505.09 536.01,499.58 535.53,493.89 535.07,488.04 534.65,482.03 534.27,475.88 533.93,469.61 533.62,463.22 533.36,456.73 533.13,450.16 532.95,443.51 532.80,436.81 532.70,430.06 532.64,423.29 532.62,416.50 532.64,409.71 532.70,402.94 532.80,396.19 532.95,389.49 533.13,382.84 533.36,376.27 533.62,369.78 533.93,363.39 534.27,357.12 534.65,350.97 535.07,344.96 535.53,339.11 536.01,333.42 536.54,327.91 537.10,322.58 537.68,317.46 538.30,312.55 538.95,307.86 539.63,303.40 540.33,299.19 541.06,295.22 541.81,291.51 542.58,288.07 543.38,284.91 544.19,282.02 545.02,279.42 545.86,277.12 546.72,275.11 547.58,273.40 548.46,272.00" fill="url(#gp)"/>
<polygon points="548.46,272.00 547.58,273.40 546.72,275.11 545.86,277.12 545.02,279.42 544.19,282.02 543.38,284.91 542.58,288.07 541.81,291.51 541.06,295.22 540.33,299.19 539.63,303.40 538.95,307.86 538.30,312.55 537.68,317.46 537.10,322.58 536.54,327.91 536.01,333.42 535.53,339.11 535.07,344.96 534.65,350.97 534.27,357.12 533.93,363.39 533.62,369.78 533.36,376.27 533.13,382.84 532.95,389.49 532.80,396.19 532.70,402.94 532.64,409.71 532.62,416.50 532.64,423.29 532.70,430.06 532.80,436.81 532.95,443.51 533.13,450.16 533.36,456.73 533.62,463.22 533.93,469.61 534.27,475.88 534.65,482.03 535.07,488.04 535.53,493.89 536.01,499.58 536.54,505.09 537.10,510.42 537.68,515.54 538.30,520.45 538.95,525.14 539.63,529.60 540.33,533.81 541.06,537.78 541.81,541.49 542.58,544.93 543.38,548.09 544.19,550.98 545.02,553.58 545.86,555.88 546.72,557.89 547.58,559.60 548.46,561.00 551.25,561.00 550.40,559.60 549.56,557.89 548.73,555.88 547.92,553.58 547.12,550.98 546.33,548.09 545.56,544.93 544.82,541.49 544.09,537.78 543.38,533.81 542.70,529.60 542.05,525.14 541.42,520.45 540.82,515.54 540.25,510.42 539.71,505.09 539.21,499.58 538.73,493.89 538.29,488.04 537.89,482.03 537.52,475.88 537.19,469.61 536.89,463.22 536.64,456.73 536.42,450.16 536.24,443.51 536.10,436.81 536.00,430.06 535.94,423.29 535.92,416.50 535.94,409.71 536.00,402.94 536.10,396.19 536.24,389.49 536.42,382.84 536.64,376.27 536.89,369.78 537.19,363.39 537.52,357.12 537.89,350.97 538.29,344.96 538.73,339.11 539.21,333.42 539.71,327.91 540.25,322.58 540.82,317.46 541.42,312.55 542.05,307.86 542.70,303.40 543.38,299.19 544.09,295.22 544.82,291.51 545.56,288.07 546.33,284.91 547.12,282.02 547.92,279.42 548.73,277.12 549.56,275.11 550.40,273.40 551.25,272.00" fill="url(#lt)"/>
<polygon points="551.25,272.00 550.40,273.40 549.56,275.11 548.73,277.12 547.92,279.42 547.12,282.02 546.33,284.91 545.56,288.07 544.82,291.51 544.09,295.22 543.38,299.19 542.70,303.40 542.05,307.86 541.42,312.55 540.82,317.46 540.25,322.58 539.71,327.91 539.21,333.42 538.73,339.11 538.29,344.96 537.89,350.97 537.52,357.12 537.19,363.39 536.89,369.78 536.64,376.27 536.42,382.84 536.24,389.49 536.10,396.19 536.00,402.94 535.94,409.71 535.92,416.50 535.94,423.29 536.00,430.06 536.10,436.81 536.24,443.51 536.42,450.16 536.64,456.73 536.89,463.22 537.19,469.61 537.52,475.88 537.89,482.03 538.29,488.04 538.73,493.89 539.21,499.58 539.71,505.09 540.25,510.42 540.82,515.54 541.42,520.45 542.05,525.14 542.70,529.60 543.38,533.81 544.09,537.78 544.82,541.49 545.56,544.93 546.33,548.09 547.12,550.98 547.92,553.58 548.73,555.88 549.56,557.89 550.40,559.60 551.25,561.00 556.66,561.00 555.87,559.60 555.08,557.89 554.31,555.88 553.55,553.58 552.80,550.98 552.06,548.09 551.34,544.93 550.64,541.49 549.96,537.78 549.31,533.81 548.67,529.60 548.06,525.14 547.47,520.45 546.91,515.54 546.38,510.42 545.87,505.09 545.40,499.58 544.96,493.89 544.55,488.04 544.17,482.03 543.82,475.88 543.51,469.61 543.24,463.22 543.00,456.73 542.79,450.16 542.62,443.51 542.49,436.81 542.40,430.06 542.34,423.29 542.33,416.50 542.34,409.71 542.40,402.94 542.49,396.19 542.62,389.49 542.79,382.84 543.00,376.27 543.24,369.78 543.51,363.39 543.82,357.12 544.17,350.97 544.55,344.96 544.96,339.11 545.40,333.42 545.87,327.91 546.38,322.58 546.91,317.46 547.47,312.55 548.06,307.86 548.67,303.40 549.31,299.19 549.96,295.22 550.64,291.51 551.34,288.07 552.06,284.91 552.80,282.02 553.55,279.42 554.31,277.12 555.08,275.11 555.87,273.40 556.66,272.00" fill="url(#gr)"/>
<polygon points="556.66,272.00 555.87,273.40 555.08,275.11 554.31,277.12 553.55,279.42 552.80,282.02 552.06,284.91 551.34,288.07 550.64,291.51 549.96,295.22 549.31,299.19 548.67,303.40 548.06,307.86 547.47,312.55 546.91,317.46 546.38,322.58 545.87,327.91 545.40,333.42 544.96,339.11 544.55,344.96 544.17,350.97 543.82,357.12 543.51,363.39 543.24,369.78 543.00,376.27 542.79,382.84 542.62,389.49 542.49,396.19 542.40,402.94 542.34,409.71 542.33,416.50 542.34,423.29 542.40,430.06 542.49,436.81 542.62,443.51 542.79,450.16 543.00,456.73 543.24,463.22 543.51,469.61 543.82,475.88 544.17,482.03 544.55,488.04 544.96,493.89 545.40,499.58 545.87,505.09 546.38,510.42 546.91,515.54 547.47,520.45 548.06,525.14 548.67,529.60 549.31,533.81 549.96,537.78 550.64,541.49 551.34,544.93 552.06,548.09 552.80,550.98 553.55,553.58 554.31,555.88 555.08,557.89 555.87,559.60 556.66,561.00 560.55,561.00 559.80,559.60 559.05,557.89 558.32,555.88 557.59,553.58 556.88,550.98 556.18,548.09 555.50,544.93 554.83,541.49 554.19,537.78 553.56,533.81 552.96,529.60 552.38,525.14 551.82,520.45 551.29,515.54 550.78,510.42 550.30,505.09 549.85,499.58 549.43,493.89 549.04,488.04 548.68,482.03 548.35,475.88 548.06,469.61 547.79,463.22 547.57,456.73 547.37,450.16 547.21,443.51 547.09,436.81 547.00,430.06 546.95,423.29 546.93,416.50 546.95,409.71 547.00,402.94 547.09,396.19 547.21,389.49 547.37,382.84 547.57,376.27 547.79,369.78 548.06,363.39 548.35,357.12 548.68,350.97 549.04,344.96 549.43,339.11 549.85,333.42 550.30,327.91 550.78,322.58 551.29,317.46 551.82,312.55 552.38,307.86 552.96,303.40 553.56,299.19 554.19,295.22 554.83,291.51 555.50,288.07 556.18,284.91 556.88,282.02 557.59,279.42 558.32,277.12 559.05,275.11 559.80,273.40 560.55,272.00" fill="#b0b0b0"/>
<polygon points="560.55,272.00 559.80,273.40 559.05,275.11 558.32,277.12 557.59,279.42 556.88,282.02 556.18,284.91 555.50,288.07 554.83,291.51 554.19,295.22 553.56,299.19 552.96,303.40 552.38,307.86 551.82,312.55 551.29,317.46 550.78,322.58 550.30,327.91 549.85,333.42 549.43,339.11 549.04,344.96 548.68,350.97 548.35,357.12 548.06,363.39 547.79,369.78 547.57,376.27 547.37,382.84 547.21,389.49 547.09,396.19 547.00,402.94 546.95,409.71 546.93,416.50 546.95,423.29 547.00,430.06 547.09,436.81 547.21,443.51 547.37,450.16 547.57,456.73 547.79,463.22 548.06,469.61 548.35,475.88 548.68,482.03 549.04,488.04 549.43,493.89 549.85,499.58 550.30,505.09 550.78,510.42 551.29,515.54 551.82,520.45 552.38,525.14 552.96,529.60 553.56,533.81 554.19,537.78 554.83,541.49 555.50,544.93 556.18,548.09 556.88,550.98 557.59,553.58 558.32,555.88 559.05,557.89 559.80,559.60 560.55,561.00 584.23,561.00 583.72,559.60 583.21,557.89 582.71,555.88 582.22,553.58 581.73,550.98 581.25,548.09 580.79,544.93 580.34,541.49 579.90,537.78 579.47,533.81 579.06,529.60 578.66,525.14 578.28,520.45 577.92,515.54 577.58,510.42 577.25,505.09 576.94,499.58 576.66,493.89 576.39,488.04 576.14,482.03 575.92,475.88 575.72,469.61 575.54,463.22 575.39,456.73 575.25,450.16 575.15,443.51 575.06,436.81 575.00,430.06 574.96,423.29 574.95,416.50 574.96,409.71 575.00,402.94 575.06,396.19 575.15,389.49 575.25,382.84 575.39,376.27 575.54,369.78 575.72,363.39 575.92,357.12 576.14,350.97 576.39,344.96 576.66,339.11 576.94,333.42 577.25,327.91 577.58,322.58 577.92,317.46 578.28,312.55 578.66,307.86 579.06,303.40 579.47,299.19 579.90,295.22 580.34,291.51 580.79,288.07 581.25,284.91 581.73,282.02 582.22,279.42 582.71,277.12 583.21,275.11 583.72,273.40 584.23,272.00" fill="#8b8bb0"/>
</g>
<clipPath id="bc"><polygon points="563.3,253.0 563.0,263.0 559.5,276.0 552.5,305.0 549.5,335.0 547.5,370.0 546.8,400.0 547.0,430.0 548.5,460.0 552.0,500.0 554.4,530.0 557.0,550.0 559.6,561.0 562.0,570.0 565.0,578.5 852.0,578.5 855.0,570.0 857.4,561.0 860.0,550.0 862.6,530.0 865.0,500.0 868.5,460.0 870.0,430.0 870.2,400.0 869.5,370.0 867.5,335.0 864.5,305.0 857.5,276.0 854.0,263.0 853.7,253.0"/></clipPath>
<g clip-path="url(#bc)">
<rect x="540" y="252" width="340" height="2" fill="#9696b0"/>
<rect x="540" y="254" width="340" height="5" fill="#b0b0de"/>
<rect x="540" y="259" width="340" height="1" fill="#9a9ab6"/>
<rect x="540" y="260" width="340" height="3" fill="#acacda"/>
<rect x="540" y="263" width="340" height="42" fill="#8c8cb2"/>
<rect x="540" y="305" width="340" height="85" fill="#707090"/>
<rect x="540" y="390" width="340" height="1" fill="#8686aa"/>
<rect x="540" y="391" width="340" height="97" fill="url(#mid)"/>
<rect x="540" y="391" width="340" height="97" fill="url(#midv)"/>
<rect x="540" y="488" width="340" height="72" fill="#707090"/>
<rect x="540" y="560" width="340" height="9" fill="#8e8eb6"/>
<rect x="540" y="569" width="340" height="2.5" fill="#a6d2a6"/>
<rect x="540" y="571.5" width="340" height="2.0" fill="#9a9ab2"/>
<rect x="540" y="573.5" width="340" height="5.5" fill="#b0b0de"/>
</g>
<polygon points="562,253.5 567,256.0 562,257.5" fill="#000"/>
<polygon points="855.0,253.5 850.0,256.0 855.0,257.5" fill="#000"/>
<polygon points="562,259.5 567,262.0 562,263.5" fill="#000"/>
<polygon points="855.0,259.5 850.0,262.0 855.0,263.5" fill="#000"/>
<path d="M610.4,366.0 L608.9,400.0 L608.9,475.0 L613.5,525.0 L616.0,548.0 L620.6,579.0" stroke="#6a6a9c" stroke-width="1.6" fill="none" stroke-linejoin="round"/>
<path d="M612.0,366.0 L610.5,400.0 L610.5,475.0 L615.3,525.0 L617.8,548.0 L622.4,579.0" stroke="#9898c0" stroke-width="1" fill="none" stroke-linejoin="round"/>
<rect x="608.2" y="398" width="1.6" height="36" fill="#c4c4c4"/>
<path d="M674.5,366.0 L673.0,400.0 L673.0,475.0 L676.0,525.0 L677.2,548.0 L679.5,579.0" stroke="#6a6a9c" stroke-width="1.6" fill="none" stroke-linejoin="round"/>
<path d="M676.1,366.0 L674.6,400.0 L674.6,475.0 L677.8,525.0 L679.0,548.0 L681.3,579.0" stroke="#9898c0" stroke-width="1" fill="none" stroke-linejoin="round"/>
<rect x="672.3" y="398" width="1.6" height="36" fill="#c4c4c4"/>
<path d="M740.0,366.0 L741.5,400.0 L741.5,475.0 L739.4,525.0 L738.9,548.0 L738.0,579.0" stroke="#6a6a9c" stroke-width="1.6" fill="none" stroke-linejoin="round"/>
<path d="M741.6,366.0 L743.1,400.0 L743.1,475.0 L737.6,525.0 L737.1,548.0 L736.2,579.0" stroke="#9898c0" stroke-width="1" fill="none" stroke-linejoin="round"/>
<path d="M806.0,366.0 L807.5,400.0 L807.5,475.0 L802.5,525.0 L799.7,548.0 L794.5,579.0" stroke="#6a6a9c" stroke-width="1.6" fill="none" stroke-linejoin="round"/>
<path d="M807.6,366.0 L809.1,400.0 L809.1,475.0 L800.8,525.0 L797.9,548.0 L792.7,579.0" stroke="#9898c0" stroke-width="1" fill="none" stroke-linejoin="round"/>
<polygon points="619.1,560 621.1,560 621.4,579 619.4,579" fill="#a4a4a4"/>
<polygon points="621.8,570 623.2,572 622.2,579 621.2,579" fill="#000"/>
<polygon points="678.0,560 680.0,560 680.3,579 678.3,579" fill="#a4a4a4"/>
<polygon points="680.7,570 682.1,572 681.1,579 680.1,579" fill="#000"/>
<polygon points="739.5,560 737.5,560 737.2,579 739.2,579" fill="#a4a4a4"/>
<polygon points="736.8,570 735.4,572 736.4,579 737.4,579" fill="#000"/>
<polygon points="796.0,560 794.0,560 793.7,579 795.7,579" fill="#a4a4a4"/>
<polygon points="793.3,570 791.9,572 792.9,579 793.9,579" fill="#000"/>
<clipPath id="ac0"><polygon points="600.1,365.2 601.6,338.8 603.7,295.5 606.2,276.0 607.7,265.3 609.3,256.0 611.3,248.4 616.0,241.1 629.5,241.1 631.7,244.0 633.7,252.0 626.0,258.0 623.8,262.0 619.6,295.5 616.4,338.8 614.9,365.2"/></clipPath>
<g clip-path="url(#ac0)">
<rect x="590" y="240" width="240" height="22" fill="#909090"/>
<rect x="590" y="262" width="240" height="17" fill="#8b8b8b"/>
<rect x="590" y="279" width="240" height="17" fill="#858585"/>
<rect x="590" y="296" width="240" height="20" fill="#7b7b7b"/>
<rect x="590" y="316" width="240" height="23" fill="#6e6e6e"/>
<rect x="590" y="339" width="240" height="25" fill="#606060"/>
<rect x="590" y="364" width="240" height="3" fill="#a0a0a0"/>
</g>
<polygon points="626.0,246.0 631.7,244.0 633.7,252.6 624.5,258.0" fill="#b2b2b2"/>
<clipPath id="ac1"><polygon points="666.1,365.2 666.5,338.8 667.1,295.5 669.7,275.0 671.0,252.5 671.9,245.7 673.2,241.3 686.8,241.3 688.2,246.6 688.5,252.5 685.3,254.0 683.4,276.0 683.0,295.5 681.9,338.8 681.9,365.2"/></clipPath>
<g clip-path="url(#ac1)">
<rect x="590" y="240" width="240" height="22" fill="#909090"/>
<rect x="590" y="262" width="240" height="17" fill="#8b8b8b"/>
<rect x="590" y="279" width="240" height="17" fill="#858585"/>
<rect x="590" y="296" width="240" height="20" fill="#7b7b7b"/>
<rect x="590" y="316" width="240" height="23" fill="#6e6e6e"/>
<rect x="590" y="339" width="240" height="25" fill="#606060"/>
<rect x="590" y="364" width="240" height="3" fill="#a0a0a0"/>
</g>
<polygon points="686.5,247.0 688.2,246.6 688.8,252.6 685.5,253.0" fill="#b2b2b2"/>
<clipPath id="ac2"><polygon points="734.1,365.2 733.5,338.8 732.8,295.5 732.5,260.0 732.6,241.3 745.4,241.3 746.7,248.0 747.6,265.0 748.0,295.5 748.5,338.8 748.9,365.2"/></clipPath>
<g clip-path="url(#ac2)">
<rect x="590" y="240" width="240" height="22" fill="#909090"/>
<rect x="590" y="262" width="240" height="17" fill="#8b8b8b"/>
<rect x="590" y="279" width="240" height="17" fill="#858585"/>
<rect x="590" y="296" width="240" height="20" fill="#7b7b7b"/>
<rect x="590" y="316" width="240" height="23" fill="#6e6e6e"/>
<rect x="590" y="339" width="240" height="25" fill="#606060"/>
<rect x="590" y="364" width="240" height="3" fill="#a0a0a0"/>
</g>
<clipPath id="ac3"><polygon points="800.9,365.2 800.2,338.8 798.1,295.5 796.6,276.0 795.7,266.0 794.0,256.0 792.0,252.6 787.1,252.6 787.7,248.0 790.0,241.1 802.8,241.1 805.0,245.0 807.7,256.0 809.5,266.0 810.8,276.0 812.9,295.5 815.0,338.8 815.6,365.2"/></clipPath>
<g clip-path="url(#ac3)">
<rect x="590" y="240" width="240" height="22" fill="#909090"/>
<rect x="590" y="262" width="240" height="17" fill="#8b8b8b"/>
<rect x="590" y="279" width="240" height="17" fill="#858585"/>
<rect x="590" y="296" width="240" height="20" fill="#7b7b7b"/>
<rect x="590" y="316" width="240" height="23" fill="#6e6e6e"/>
<rect x="590" y="339" width="240" height="25" fill="#606060"/>
<rect x="590" y="364" width="240" height="3" fill="#a0a0a0"/>
</g>
<polygon points="790.0,241.5 793.0,243.0 793.0,252.6 787.1,252.6 787.7,248.0" fill="#b2b2b2"/>
</svg></div>
<div style="left:315px;top:695px;width:763px;height:1px;background:#9c9c9c;"></div>
<svg style="position:absolute;left:642px;top:698px" width="110" height="7"><path d="M1 1.5 L4.5 5 L8 1.5" stroke="#000" stroke-width="1.6" fill="none"/><path d="M101 1.5 L104.5 5 L108 1.5" stroke="#000" stroke-width="1.6" fill="none"/><line x1="11" y1="3.5" x2="99" y2="3.5" stroke="#444" stroke-width="1" stroke-dasharray="1 2"/></svg>
<div style="left:315px;top:706px;width:70px;height:20px;border-top:1px solid #fff;border-left:1px solid #fff;border-right:1px solid #9c9c9c;border-top-left-radius:3px;"></div>
<div class="t" style="left:320px;top:709px;font-size:12.5px;">Command</div>
<div style="left:385px;top:725px;width:693px;height:1px;background:#fff;"></div>
<div style="left:315px;top:725px;width:1px;height:76px;background:#fff;"></div>
<div style="left:1077px;top:725px;width:1px;height:76px;background:#9c9c9c;"></div>
<div style="left:315px;top:800px;width:763px;height:1px;background:#9c9c9c;"></div>
<div class="t" style="left:324px;top:735px;font-size:12.5px;">Command (local):</div>
<div style="left:433px;top:731px;width:635px;height:21px;background:#fff;border-top:1px solid #9c9c9c;border-left:1px solid #9c9c9c;"></div>
<div style="left:1051px;top:731px;width:16px;height:19px;background:#e8e8e8;border:1px solid #8c8c8c;box-shadow:inset 1px 1px 0 #fff;"></div>
<svg style="position:absolute;left:1054px;top:738px" width="9" height="5"><path d="M0 0 L9 0 L4.5 5Z" fill="#000"/></svg>
<div style="left:319px;top:759px;width:754px;height:38px;background:#fff;border-top:1px solid #9c9c9c;border-left:1px solid #9c9c9c;border-right:1px solid #e0e0e0;border-bottom:1px solid #e0e0e0;box-shadow:inset 2px 2px 0 #e8e8e8;"></div>
<div style="left:56px;top:801px;width:1024px;height:1px;background:#fff;"></div>
<div style="left:56px;top:803px;width:335px;height:19px;border-top:1px solid #9c9c9c;border-right:1px solid #fff;"></div>
<div style="left:393px;top:803px;width:100px;height:19px;border-top:1px solid #9c9c9c;border-left:1px solid #9c9c9c;border-right:1px solid #fff;"></div>
<div style="left:495px;top:803px;width:100px;height:19px;border-top:1px solid #9c9c9c;border-left:1px solid #9c9c9c;border-right:1px solid #fff;"></div>
<div style="left:597px;top:803px;width:481px;height:19px;border-top:1px solid #9c9c9c;border-left:1px solid #9c9c9c;border-right:1px solid #fff;"></div>
<svg style="position:absolute;left:1066px;top:808px" width="13" height="13"><path d="M12.5 1.5 L1.5 12.5 M12.5 5.5 L5.5 12.5 M12.5 9.5 L9.5 12.5" stroke="#7a7a7a" stroke-width="1.2"/></svg>
</body></html>
